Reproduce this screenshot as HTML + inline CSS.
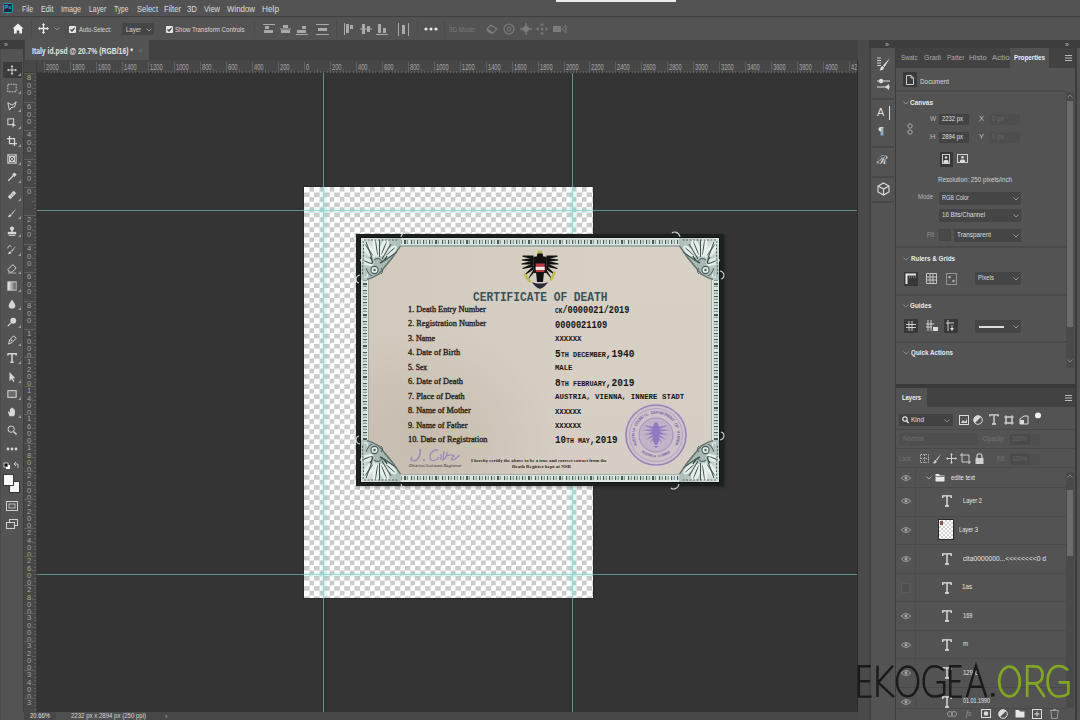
<!DOCTYPE html>
<html><head><meta charset="utf-8"><style>
*{margin:0;padding:0;box-sizing:border-box}
html,body{width:1080px;height:720px;overflow:hidden;background:#535353;font-family:"Liberation Sans",sans-serif;color:#ddd;position:relative}
.a{position:absolute}
.t{position:absolute;white-space:nowrap;line-height:1}
svg{position:absolute;overflow:visible}
.mi{font-size:9.5px;top:3px;color:#e4e4e4}
.ot{font-size:8px;color:#dedede}
.checker{background-color:#fff;background-image:linear-gradient(45deg,#cdcdcd 25%,transparent 25%,transparent 75%,#cdcdcd 75%),linear-gradient(45deg,#cdcdcd 25%,transparent 25%,transparent 75%,#cdcdcd 75%);background-size:10px 10px;background-position:0 0,5px 5px}
.rl{position:absolute;font-size:6.5px;color:#b4b4b4;line-height:1;white-space:nowrap}
.rt{position:absolute;background:#5f5f5f}
.sep{position:absolute;background:#3f3f3f;width:1px}
.ph{position:absolute;font-size:8px;font-weight:bold;color:#e8e8e8;white-space:nowrap;line-height:1}
.pt{position:absolute;font-size:7px;color:#d0d0d0;white-space:nowrap;line-height:1}
.dd{position:absolute;background:#454545;border-radius:1px}
.hl{position:absolute;background:#474747;height:1px}

</style></head><body>
<div class="a" style="left:0px;top:0px;width:1080px;height:16px;background:#535353;"></div>
<div class="a" style="left:3px;top:3px;width:10px;height:10px;background:#0d2d38;border:1px solid #2e9fc4;border-radius:1.5px;"></div>
<div class="t" style="left:4.5px;top:5.22px;font-size:5.5px;color:#3fb4e4;font-family:'Liberation Sans',sans-serif;font-weight:bold;">Ps</div>
<div class="t" style="left:22px;top:3.55px;font-size:9.6px;color:#dedede;font-family:'Liberation Sans',sans-serif;transform:scaleX(0.711);transform-origin:0 0;">File</div>
<div class="t" style="left:40.5px;top:3.55px;font-size:9.6px;color:#dedede;font-family:'Liberation Sans',sans-serif;transform:scaleX(0.756);transform-origin:0 0;">Edit</div>
<div class="t" style="left:60.6px;top:3.55px;font-size:9.6px;color:#dedede;font-family:'Liberation Sans',sans-serif;transform:scaleX(0.750);transform-origin:0 0;">Image</div>
<div class="t" style="left:88.8px;top:3.55px;font-size:9.6px;color:#dedede;font-family:'Liberation Sans',sans-serif;transform:scaleX(0.716);transform-origin:0 0;">Layer</div>
<div class="t" style="left:114.4px;top:3.55px;font-size:9.6px;color:#dedede;font-family:'Liberation Sans',sans-serif;transform:scaleX(0.692);transform-origin:0 0;">Type</div>
<div class="t" style="left:137px;top:3.55px;font-size:9.6px;color:#dedede;font-family:'Liberation Sans',sans-serif;transform:scaleX(0.787);transform-origin:0 0;">Select</div>
<div class="t" style="left:164px;top:3.55px;font-size:9.6px;color:#dedede;font-family:'Liberation Sans',sans-serif;transform:scaleX(0.797);transform-origin:0 0;">Filter</div>
<div class="t" style="left:187px;top:3.55px;font-size:9.6px;color:#dedede;font-family:'Liberation Sans',sans-serif;transform:scaleX(0.815);transform-origin:0 0;">3D</div>
<div class="t" style="left:204px;top:3.55px;font-size:9.6px;color:#dedede;font-family:'Liberation Sans',sans-serif;transform:scaleX(0.775);transform-origin:0 0;">View</div>
<div class="t" style="left:227px;top:3.55px;font-size:9.6px;color:#dedede;font-family:'Liberation Sans',sans-serif;transform:scaleX(0.820);transform-origin:0 0;">Window</div>
<div class="t" style="left:262px;top:3.55px;font-size:9.6px;color:#dedede;font-family:'Liberation Sans',sans-serif;transform:scaleX(0.861);transform-origin:0 0;">Help</div>
<div class="a" style="left:556px;top:0px;width:120px;height:2px;background:#ececec;"></div>
<div class="a" style="left:0px;top:16px;width:1080px;height:1px;background:#3f3f3f;"></div>
<svg style="left:12px;top:23px;" width="12" height="11" viewBox="0 0 12 11"><path d="M6 0.5 L11.5 5.5 L10 5.5 L10 10.5 L7.3 10.5 L7.3 7.5 L4.7 7.5 L4.7 10.5 L2 10.5 L2 5.5 L0.5 5.5 Z" fill="#efefef"/></svg>
<div class="a" style="left:31px;top:19px;width:1px;height:19px;background:#4c4c4c;"></div>
<div class="a" style="left:65px;top:19px;width:1px;height:19px;background:#4c4c4c;"></div>
<div class="a" style="left:254px;top:19px;width:1px;height:19px;background:#4c4c4c;"></div>
<div class="a" style="left:336px;top:19px;width:1px;height:19px;background:#4c4c4c;"></div>
<div class="a" style="left:417px;top:19px;width:1px;height:19px;background:#4c4c4c;"></div>
<div class="a" style="left:444px;top:19px;width:1px;height:19px;background:#4c4c4c;"></div>
<svg style="left:38px;top:23px;" width="11" height="11" viewBox="0 0 11 11"><path d="M5.5 0 L7.3 2 L6.2 2 L6.2 4.8 L9 4.8 L9 3.7 L11 5.5 L9 7.3 L9 6.2 L6.2 6.2 L6.2 9 L7.3 9 L5.5 11 L3.7 9 L4.8 9 L4.8 6.2 L2 6.2 L2 7.3 L0 5.5 L2 3.7 L2 4.8 L4.8 4.8 L4.8 2 L3.7 2 Z" fill="#e8e8e8"/></svg>
<svg style="left:54px;top:27px;" width="6" height="4" viewBox="0 0 6 4"><path d="M0.5 0.5 L3 3 L5.5 0.5" stroke="#8a8a8a" fill="none" stroke-width="1"/></svg>
<div class="a" style="left:69px;top:25.5px;width:7px;height:7px;background:#e6e6e6;border-radius:1px;"></div>
<svg style="left:69px;top:25.5px;" width="7" height="7" viewBox="0 0 7 7"><path d="M1.5 3.5 L3 5 L5.6 1.8" stroke="#3a3a3a" fill="none" stroke-width="1.2"/></svg>
<div class="a" style="left:165.5px;top:25.5px;width:7px;height:7px;background:#e6e6e6;border-radius:1px;"></div>
<svg style="left:165.5px;top:25.5px;" width="7" height="7" viewBox="0 0 7 7"><path d="M1.5 3.5 L3 5 L5.6 1.8" stroke="#3a3a3a" fill="none" stroke-width="1.2"/></svg>
<div class="t" style="left:78.5px;top:25.71px;font-size:7.3px;color:#d8d8d8;font-family:'Liberation Sans',sans-serif;transform:scaleX(0.817);transform-origin:0 0;">Auto-Select:</div>
<div class="a" style="left:121.5px;top:23px;width:32px;height:12px;background:#454545;border-radius:1px;"></div>
<div class="t" style="left:126px;top:25.71px;font-size:7.3px;color:#d8d8d8;font-family:'Liberation Sans',sans-serif;transform:scaleX(0.821);transform-origin:0 0;">Layer</div>
<svg style="left:146px;top:27.5px;" width="6" height="4" viewBox="0 0 6 4"><path d="M0.5 0.5 L3 3 L5.5 0.5" stroke="#999" fill="none" stroke-width="1"/></svg>
<div class="t" style="left:175.3px;top:25.71px;font-size:7.3px;color:#d8d8d8;font-family:'Liberation Sans',sans-serif;transform:scaleX(0.845);transform-origin:0 0;">Show Transform Controls</div>
<svg style="left:263px;top:24px;" width="12" height="11" viewBox="0 0 12 11"><rect x="0" y="0" width="12" height="1" fill="#a9a9a9"/><rect x="2" y="2" width="4" height="3" fill="#a9a9a9"/><rect x="1" y="6" width="9" height="3" fill="#a9a9a9"/></svg>
<svg style="left:280px;top:23px;" width="11" height="12" viewBox="0 0 11 12"><rect x="0" y="5.5" width="11" height="1" fill="#a9a9a9"/><rect x="3" y="2" width="5" height="3" fill="#a9a9a9"/><rect x="1" y="7" width="9" height="3" fill="#a9a9a9"/></svg>
<svg style="left:296px;top:24px;" width="12" height="11" viewBox="0 0 12 11"><rect x="0" y="10" width="12" height="1" fill="#a9a9a9"/><rect x="6" y="2" width="4" height="3" fill="#a9a9a9"/><rect x="1" y="6" width="9" height="3" fill="#a9a9a9"/></svg>
<svg style="left:316px;top:24px;" width="13" height="11" viewBox="0 0 13 11"><rect x="0" y="0" width="13" height="1" fill="#a9a9a9"/><rect x="0" y="10" width="13" height="1" fill="#a9a9a9"/><rect x="2" y="4" width="9" height="3" fill="#a9a9a9"/></svg>
<svg style="left:344px;top:23px;" width="11" height="12" viewBox="0 0 11 12"><rect x="0" y="0" width="1" height="12" fill="#a9a9a9"/><rect x="2" y="1" width="3" height="9" fill="#a9a9a9"/><rect x="6" y="2" width="3" height="4" fill="#a9a9a9"/></svg>
<svg style="left:360px;top:23px;" width="12" height="12" viewBox="0 0 12 12"><rect x="0" y="5.5" width="12" height="1" fill="#a9a9a9"/><rect x="2" y="1" width="3" height="10" fill="#a9a9a9"/><rect x="7" y="3" width="3" height="6" fill="#a9a9a9"/></svg>
<svg style="left:376px;top:23px;" width="12" height="12" viewBox="0 0 12 12"><rect x="0" y="11" width="12" height="1" fill="#a9a9a9"/><rect x="2" y="1" width="3" height="9" fill="#a9a9a9"/><rect x="7" y="5" width="3" height="5" fill="#a9a9a9"/></svg>
<svg style="left:398px;top:23px;" width="11" height="13" viewBox="0 0 11 13"><rect x="0" y="0" width="1" height="13" fill="#a9a9a9"/><rect x="10" y="0" width="1" height="13" fill="#a9a9a9"/><rect x="4" y="2" width="3" height="9" fill="#a9a9a9"/></svg>
<svg style="left:424px;top:27px;" width="14" height="4" viewBox="0 0 14 4"><circle cx="2" cy="2" r="1.6" fill="#e6e6e6"/><circle cx="7" cy="2" r="1.6" fill="#e6e6e6"/><circle cx="12" cy="2" r="1.6" fill="#e6e6e6"/></svg>
<div class="t" style="left:449px;top:25.71px;font-size:7.3px;color:#7a7a7a;font-family:'Liberation Sans',sans-serif;transform:scaleX(0.853);transform-origin:0 0;">3D Mode:</div>
<svg style="left:486px;top:23px;" width="12" height="12" viewBox="0 0 12 12"><path d="M1 6 L5 2 L11 6 L7 10 Z M1 6 C2 9 5 10 7 10" stroke="#7c7c7c" fill="none" stroke-width="1.3"/></svg>
<svg style="left:503px;top:23px;" width="12" height="12" viewBox="0 0 12 12"><circle cx="6" cy="6" r="5" stroke="#7c7c7c" fill="none" stroke-width="1.2"/><circle cx="6" cy="6" r="2" stroke="#7c7c7c" fill="none" stroke-width="1"/></svg>
<svg style="left:520px;top:23px;" width="12" height="12" viewBox="0 0 12 12"><path d="M6 0 L6 12 M0 6 L12 6" stroke="#7c7c7c" stroke-width="1.3"/><circle cx="6" cy="6" r="3" fill="#7c7c7c"/></svg>
<svg style="left:536px;top:23px;" width="12" height="12" viewBox="0 0 12 12"><path d="M6 0 L8 2.5 L4 2.5 Z M6 12 L8 9.5 L4 9.5 Z M0 6 L2.5 4 L2.5 8 Z M12 6 L9.5 4 L9.5 8 Z" fill="#7c7c7c"/><circle cx="6" cy="6" r="1.3" fill="#7c7c7c"/></svg>
<svg style="left:553px;top:24px;" width="14" height="10" viewBox="0 0 14 10"><rect x="0" y="2" width="8" height="6" fill="#7c7c7c"/><path d="M9 5 L13 1.5 L13 8.5 Z" stroke="#7c7c7c" fill="none"/></svg>
<div class="a" style="left:24px;top:40px;width:835px;height:20px;background:#424242;"></div>
<div class="a" style="left:25px;top:40px;width:124px;height:20px;background:#535353;"></div>
<div class="t" style="left:32px;top:47.41px;font-size:8.3px;color:#e4e4e4;font-family:'Liberation Sans',sans-serif;font-weight:bold;transform:scaleX(0.822);transform-origin:0 0;">Italy id.psd @ 20.7% (RGB/16) *</div>
<div class="t" style="left:138px;top:47.46px;font-size:8px;color:#7a7a7a;font-family:'Liberation Sans',sans-serif;">×</div>
<div class="a" style="left:24px;top:712px;width:835px;height:8px;background:#474747;"></div>
<div class="a" style="left:56px;top:712px;width:90px;height:8px;background:#505050;"></div>
<div class="t" style="left:30px;top:713.22px;font-size:6.5px;color:#e0e0e0;font-family:'Liberation Sans',sans-serif;transform:scaleX(0.907);transform-origin:0 0;">20.66%</div>
<div class="t" style="left:71px;top:713.22px;font-size:6.5px;color:#d0d0d0;font-family:'Liberation Sans',sans-serif;transform:scaleX(0.931);transform-origin:0 0;">2232 px x 2894 px (250 ppi)</div>
<div class="t" style="left:165px;top:712.97px;font-size:7px;color:#bbb;font-family:'Liberation Sans',sans-serif;">&#x203A;</div>
<div class="a" style="left:24px;top:60px;width:834px;height:13px;background:#474747"></div>
<div class="a" style="left:24px;top:72px;width:834px;height:1px;background:#3c3c3c"></div>
<div class="a" style="left:24px;top:73px;width:12px;height:639px;background:#474747"></div>
<div class="a" style="left:36px;top:60px;width:1px;height:652px;background:#3c3c3c"></div>
<div class="a" style="left:37px;top:73px;width:821px;height:639px;background:#343434"></div>
<div class="rt" style="left:44px;top:62px;width:1px;height:11px"></div>
<div class="rt" style="left:48px;top:71px;width:1px;height:2px"></div>
<div class="rt" style="left:51px;top:71px;width:1px;height:2px"></div>
<div class="rt" style="left:54px;top:71px;width:1px;height:2px"></div>
<div class="rt" style="left:57px;top:69px;width:1px;height:4px"></div>
<div class="rt" style="left:61px;top:71px;width:1px;height:2px"></div>
<div class="rt" style="left:64px;top:71px;width:1px;height:2px"></div>
<div class="rt" style="left:67px;top:71px;width:1px;height:2px"></div>
<div class="t" style="left:45.5px;top:63.01px;font-size:8.5px;color:#a6a6a6;font-family:'Liberation Sans',sans-serif;transform:scaleX(0.666);transform-origin:0 0;">2000</div>
<div class="rt" style="left:70px;top:62px;width:1px;height:11px"></div>
<div class="rt" style="left:74px;top:71px;width:1px;height:2px"></div>
<div class="rt" style="left:77px;top:71px;width:1px;height:2px"></div>
<div class="rt" style="left:80px;top:71px;width:1px;height:2px"></div>
<div class="rt" style="left:83px;top:69px;width:1px;height:4px"></div>
<div class="rt" style="left:87px;top:71px;width:1px;height:2px"></div>
<div class="rt" style="left:90px;top:71px;width:1px;height:2px"></div>
<div class="rt" style="left:93px;top:71px;width:1px;height:2px"></div>
<div class="t" style="left:71.5px;top:63.01px;font-size:8.5px;color:#a6a6a6;font-family:'Liberation Sans',sans-serif;transform:scaleX(0.666);transform-origin:0 0;">1800</div>
<div class="rt" style="left:96px;top:62px;width:1px;height:11px"></div>
<div class="rt" style="left:100px;top:71px;width:1px;height:2px"></div>
<div class="rt" style="left:103px;top:71px;width:1px;height:2px"></div>
<div class="rt" style="left:106px;top:71px;width:1px;height:2px"></div>
<div class="rt" style="left:109px;top:69px;width:1px;height:4px"></div>
<div class="rt" style="left:113px;top:71px;width:1px;height:2px"></div>
<div class="rt" style="left:116px;top:71px;width:1px;height:2px"></div>
<div class="rt" style="left:119px;top:71px;width:1px;height:2px"></div>
<div class="t" style="left:97.5px;top:63.01px;font-size:8.5px;color:#a6a6a6;font-family:'Liberation Sans',sans-serif;transform:scaleX(0.666);transform-origin:0 0;">1600</div>
<div class="rt" style="left:122px;top:62px;width:1px;height:11px"></div>
<div class="rt" style="left:126px;top:71px;width:1px;height:2px"></div>
<div class="rt" style="left:129px;top:71px;width:1px;height:2px"></div>
<div class="rt" style="left:132px;top:71px;width:1px;height:2px"></div>
<div class="rt" style="left:135px;top:69px;width:1px;height:4px"></div>
<div class="rt" style="left:139px;top:71px;width:1px;height:2px"></div>
<div class="rt" style="left:142px;top:71px;width:1px;height:2px"></div>
<div class="rt" style="left:145px;top:71px;width:1px;height:2px"></div>
<div class="t" style="left:123.5px;top:63.01px;font-size:8.5px;color:#a6a6a6;font-family:'Liberation Sans',sans-serif;transform:scaleX(0.666);transform-origin:0 0;">1400</div>
<div class="rt" style="left:148px;top:62px;width:1px;height:11px"></div>
<div class="rt" style="left:152px;top:71px;width:1px;height:2px"></div>
<div class="rt" style="left:155px;top:71px;width:1px;height:2px"></div>
<div class="rt" style="left:158px;top:71px;width:1px;height:2px"></div>
<div class="rt" style="left:161px;top:69px;width:1px;height:4px"></div>
<div class="rt" style="left:165px;top:71px;width:1px;height:2px"></div>
<div class="rt" style="left:168px;top:71px;width:1px;height:2px"></div>
<div class="rt" style="left:171px;top:71px;width:1px;height:2px"></div>
<div class="t" style="left:149.5px;top:63.01px;font-size:8.5px;color:#a6a6a6;font-family:'Liberation Sans',sans-serif;transform:scaleX(0.666);transform-origin:0 0;">1200</div>
<div class="rt" style="left:174px;top:62px;width:1px;height:11px"></div>
<div class="rt" style="left:177px;top:71px;width:1px;height:2px"></div>
<div class="rt" style="left:181px;top:71px;width:1px;height:2px"></div>
<div class="rt" style="left:184px;top:71px;width:1px;height:2px"></div>
<div class="rt" style="left:187px;top:69px;width:1px;height:4px"></div>
<div class="rt" style="left:190px;top:71px;width:1px;height:2px"></div>
<div class="rt" style="left:194px;top:71px;width:1px;height:2px"></div>
<div class="rt" style="left:197px;top:71px;width:1px;height:2px"></div>
<div class="t" style="left:175.5px;top:63.01px;font-size:8.5px;color:#a6a6a6;font-family:'Liberation Sans',sans-serif;transform:scaleX(0.666);transform-origin:0 0;">1000</div>
<div class="rt" style="left:200px;top:62px;width:1px;height:11px"></div>
<div class="rt" style="left:203px;top:71px;width:1px;height:2px"></div>
<div class="rt" style="left:207px;top:71px;width:1px;height:2px"></div>
<div class="rt" style="left:210px;top:71px;width:1px;height:2px"></div>
<div class="rt" style="left:213px;top:69px;width:1px;height:4px"></div>
<div class="rt" style="left:216px;top:71px;width:1px;height:2px"></div>
<div class="rt" style="left:220px;top:71px;width:1px;height:2px"></div>
<div class="rt" style="left:223px;top:71px;width:1px;height:2px"></div>
<div class="t" style="left:201.5px;top:63.01px;font-size:8.5px;color:#a6a6a6;font-family:'Liberation Sans',sans-serif;transform:scaleX(0.666);transform-origin:0 0;">800</div>
<div class="rt" style="left:226px;top:62px;width:1px;height:11px"></div>
<div class="rt" style="left:229px;top:71px;width:1px;height:2px"></div>
<div class="rt" style="left:233px;top:71px;width:1px;height:2px"></div>
<div class="rt" style="left:236px;top:71px;width:1px;height:2px"></div>
<div class="rt" style="left:239px;top:69px;width:1px;height:4px"></div>
<div class="rt" style="left:242px;top:71px;width:1px;height:2px"></div>
<div class="rt" style="left:246px;top:71px;width:1px;height:2px"></div>
<div class="rt" style="left:249px;top:71px;width:1px;height:2px"></div>
<div class="t" style="left:227.5px;top:63.01px;font-size:8.5px;color:#a6a6a6;font-family:'Liberation Sans',sans-serif;transform:scaleX(0.666);transform-origin:0 0;">600</div>
<div class="rt" style="left:252px;top:62px;width:1px;height:11px"></div>
<div class="rt" style="left:255px;top:71px;width:1px;height:2px"></div>
<div class="rt" style="left:259px;top:71px;width:1px;height:2px"></div>
<div class="rt" style="left:262px;top:71px;width:1px;height:2px"></div>
<div class="rt" style="left:265px;top:69px;width:1px;height:4px"></div>
<div class="rt" style="left:268px;top:71px;width:1px;height:2px"></div>
<div class="rt" style="left:272px;top:71px;width:1px;height:2px"></div>
<div class="rt" style="left:275px;top:71px;width:1px;height:2px"></div>
<div class="t" style="left:253.5px;top:63.01px;font-size:8.5px;color:#a6a6a6;font-family:'Liberation Sans',sans-serif;transform:scaleX(0.666);transform-origin:0 0;">400</div>
<div class="rt" style="left:278px;top:62px;width:1px;height:11px"></div>
<div class="rt" style="left:281px;top:71px;width:1px;height:2px"></div>
<div class="rt" style="left:285px;top:71px;width:1px;height:2px"></div>
<div class="rt" style="left:288px;top:71px;width:1px;height:2px"></div>
<div class="rt" style="left:291px;top:69px;width:1px;height:4px"></div>
<div class="rt" style="left:294px;top:71px;width:1px;height:2px"></div>
<div class="rt" style="left:298px;top:71px;width:1px;height:2px"></div>
<div class="rt" style="left:301px;top:71px;width:1px;height:2px"></div>
<div class="t" style="left:279.5px;top:63.01px;font-size:8.5px;color:#a6a6a6;font-family:'Liberation Sans',sans-serif;transform:scaleX(0.666);transform-origin:0 0;">200</div>
<div class="rt" style="left:304px;top:62px;width:1px;height:11px"></div>
<div class="rt" style="left:307px;top:71px;width:1px;height:2px"></div>
<div class="rt" style="left:310px;top:71px;width:1px;height:2px"></div>
<div class="rt" style="left:314px;top:71px;width:1px;height:2px"></div>
<div class="rt" style="left:317px;top:69px;width:1px;height:4px"></div>
<div class="rt" style="left:320px;top:71px;width:1px;height:2px"></div>
<div class="rt" style="left:323px;top:71px;width:1px;height:2px"></div>
<div class="rt" style="left:327px;top:71px;width:1px;height:2px"></div>
<div class="t" style="left:305.5px;top:63.01px;font-size:8.5px;color:#a6a6a6;font-family:'Liberation Sans',sans-serif;transform:scaleX(0.666);transform-origin:0 0;">0</div>
<div class="rt" style="left:330px;top:62px;width:1px;height:11px"></div>
<div class="rt" style="left:333px;top:71px;width:1px;height:2px"></div>
<div class="rt" style="left:336px;top:71px;width:1px;height:2px"></div>
<div class="rt" style="left:340px;top:71px;width:1px;height:2px"></div>
<div class="rt" style="left:343px;top:69px;width:1px;height:4px"></div>
<div class="rt" style="left:346px;top:71px;width:1px;height:2px"></div>
<div class="rt" style="left:349px;top:71px;width:1px;height:2px"></div>
<div class="rt" style="left:353px;top:71px;width:1px;height:2px"></div>
<div class="t" style="left:331.5px;top:63.01px;font-size:8.5px;color:#a6a6a6;font-family:'Liberation Sans',sans-serif;transform:scaleX(0.666);transform-origin:0 0;">200</div>
<div class="rt" style="left:356px;top:62px;width:1px;height:11px"></div>
<div class="rt" style="left:359px;top:71px;width:1px;height:2px"></div>
<div class="rt" style="left:362px;top:71px;width:1px;height:2px"></div>
<div class="rt" style="left:366px;top:71px;width:1px;height:2px"></div>
<div class="rt" style="left:369px;top:69px;width:1px;height:4px"></div>
<div class="rt" style="left:372px;top:71px;width:1px;height:2px"></div>
<div class="rt" style="left:375px;top:71px;width:1px;height:2px"></div>
<div class="rt" style="left:379px;top:71px;width:1px;height:2px"></div>
<div class="t" style="left:357.5px;top:63.01px;font-size:8.5px;color:#a6a6a6;font-family:'Liberation Sans',sans-serif;transform:scaleX(0.666);transform-origin:0 0;">400</div>
<div class="rt" style="left:382px;top:62px;width:1px;height:11px"></div>
<div class="rt" style="left:385px;top:71px;width:1px;height:2px"></div>
<div class="rt" style="left:388px;top:71px;width:1px;height:2px"></div>
<div class="rt" style="left:392px;top:71px;width:1px;height:2px"></div>
<div class="rt" style="left:395px;top:69px;width:1px;height:4px"></div>
<div class="rt" style="left:398px;top:71px;width:1px;height:2px"></div>
<div class="rt" style="left:401px;top:71px;width:1px;height:2px"></div>
<div class="rt" style="left:405px;top:71px;width:1px;height:2px"></div>
<div class="t" style="left:383.5px;top:63.01px;font-size:8.5px;color:#a6a6a6;font-family:'Liberation Sans',sans-serif;transform:scaleX(0.666);transform-origin:0 0;">600</div>
<div class="rt" style="left:408px;top:62px;width:1px;height:11px"></div>
<div class="rt" style="left:411px;top:71px;width:1px;height:2px"></div>
<div class="rt" style="left:414px;top:71px;width:1px;height:2px"></div>
<div class="rt" style="left:418px;top:71px;width:1px;height:2px"></div>
<div class="rt" style="left:421px;top:69px;width:1px;height:4px"></div>
<div class="rt" style="left:424px;top:71px;width:1px;height:2px"></div>
<div class="rt" style="left:427px;top:71px;width:1px;height:2px"></div>
<div class="rt" style="left:431px;top:71px;width:1px;height:2px"></div>
<div class="t" style="left:409.5px;top:63.01px;font-size:8.5px;color:#a6a6a6;font-family:'Liberation Sans',sans-serif;transform:scaleX(0.666);transform-origin:0 0;">800</div>
<div class="rt" style="left:434px;top:62px;width:1px;height:11px"></div>
<div class="rt" style="left:437px;top:71px;width:1px;height:2px"></div>
<div class="rt" style="left:440px;top:71px;width:1px;height:2px"></div>
<div class="rt" style="left:443px;top:71px;width:1px;height:2px"></div>
<div class="rt" style="left:447px;top:69px;width:1px;height:4px"></div>
<div class="rt" style="left:450px;top:71px;width:1px;height:2px"></div>
<div class="rt" style="left:453px;top:71px;width:1px;height:2px"></div>
<div class="rt" style="left:456px;top:71px;width:1px;height:2px"></div>
<div class="t" style="left:435.5px;top:63.01px;font-size:8.5px;color:#a6a6a6;font-family:'Liberation Sans',sans-serif;transform:scaleX(0.666);transform-origin:0 0;">1000</div>
<div class="rt" style="left:460px;top:62px;width:1px;height:11px"></div>
<div class="rt" style="left:463px;top:71px;width:1px;height:2px"></div>
<div class="rt" style="left:466px;top:71px;width:1px;height:2px"></div>
<div class="rt" style="left:469px;top:71px;width:1px;height:2px"></div>
<div class="rt" style="left:473px;top:69px;width:1px;height:4px"></div>
<div class="rt" style="left:476px;top:71px;width:1px;height:2px"></div>
<div class="rt" style="left:479px;top:71px;width:1px;height:2px"></div>
<div class="rt" style="left:482px;top:71px;width:1px;height:2px"></div>
<div class="t" style="left:461.5px;top:63.01px;font-size:8.5px;color:#a6a6a6;font-family:'Liberation Sans',sans-serif;transform:scaleX(0.666);transform-origin:0 0;">1200</div>
<div class="rt" style="left:486px;top:62px;width:1px;height:11px"></div>
<div class="rt" style="left:489px;top:71px;width:1px;height:2px"></div>
<div class="rt" style="left:492px;top:71px;width:1px;height:2px"></div>
<div class="rt" style="left:495px;top:71px;width:1px;height:2px"></div>
<div class="rt" style="left:499px;top:69px;width:1px;height:4px"></div>
<div class="rt" style="left:502px;top:71px;width:1px;height:2px"></div>
<div class="rt" style="left:505px;top:71px;width:1px;height:2px"></div>
<div class="rt" style="left:508px;top:71px;width:1px;height:2px"></div>
<div class="t" style="left:487.5px;top:63.01px;font-size:8.5px;color:#a6a6a6;font-family:'Liberation Sans',sans-serif;transform:scaleX(0.666);transform-origin:0 0;">1400</div>
<div class="rt" style="left:512px;top:62px;width:1px;height:11px"></div>
<div class="rt" style="left:515px;top:71px;width:1px;height:2px"></div>
<div class="rt" style="left:518px;top:71px;width:1px;height:2px"></div>
<div class="rt" style="left:521px;top:71px;width:1px;height:2px"></div>
<div class="rt" style="left:525px;top:69px;width:1px;height:4px"></div>
<div class="rt" style="left:528px;top:71px;width:1px;height:2px"></div>
<div class="rt" style="left:531px;top:71px;width:1px;height:2px"></div>
<div class="rt" style="left:534px;top:71px;width:1px;height:2px"></div>
<div class="t" style="left:513.5px;top:63.01px;font-size:8.5px;color:#a6a6a6;font-family:'Liberation Sans',sans-serif;transform:scaleX(0.666);transform-origin:0 0;">1600</div>
<div class="rt" style="left:538px;top:62px;width:1px;height:11px"></div>
<div class="rt" style="left:541px;top:71px;width:1px;height:2px"></div>
<div class="rt" style="left:544px;top:71px;width:1px;height:2px"></div>
<div class="rt" style="left:547px;top:71px;width:1px;height:2px"></div>
<div class="rt" style="left:551px;top:69px;width:1px;height:4px"></div>
<div class="rt" style="left:554px;top:71px;width:1px;height:2px"></div>
<div class="rt" style="left:557px;top:71px;width:1px;height:2px"></div>
<div class="rt" style="left:560px;top:71px;width:1px;height:2px"></div>
<div class="t" style="left:539.5px;top:63.01px;font-size:8.5px;color:#a6a6a6;font-family:'Liberation Sans',sans-serif;transform:scaleX(0.666);transform-origin:0 0;">1800</div>
<div class="rt" style="left:564px;top:62px;width:1px;height:11px"></div>
<div class="rt" style="left:567px;top:71px;width:1px;height:2px"></div>
<div class="rt" style="left:570px;top:71px;width:1px;height:2px"></div>
<div class="rt" style="left:573px;top:71px;width:1px;height:2px"></div>
<div class="rt" style="left:576px;top:69px;width:1px;height:4px"></div>
<div class="rt" style="left:580px;top:71px;width:1px;height:2px"></div>
<div class="rt" style="left:583px;top:71px;width:1px;height:2px"></div>
<div class="rt" style="left:586px;top:71px;width:1px;height:2px"></div>
<div class="t" style="left:565.5px;top:63.01px;font-size:8.5px;color:#a6a6a6;font-family:'Liberation Sans',sans-serif;transform:scaleX(0.666);transform-origin:0 0;">2000</div>
<div class="rt" style="left:589px;top:62px;width:1px;height:11px"></div>
<div class="rt" style="left:593px;top:71px;width:1px;height:2px"></div>
<div class="rt" style="left:596px;top:71px;width:1px;height:2px"></div>
<div class="rt" style="left:599px;top:71px;width:1px;height:2px"></div>
<div class="rt" style="left:602px;top:69px;width:1px;height:4px"></div>
<div class="rt" style="left:606px;top:71px;width:1px;height:2px"></div>
<div class="rt" style="left:609px;top:71px;width:1px;height:2px"></div>
<div class="rt" style="left:612px;top:71px;width:1px;height:2px"></div>
<div class="t" style="left:590.5px;top:63.01px;font-size:8.5px;color:#a6a6a6;font-family:'Liberation Sans',sans-serif;transform:scaleX(0.666);transform-origin:0 0;">2200</div>
<div class="rt" style="left:615px;top:62px;width:1px;height:11px"></div>
<div class="rt" style="left:619px;top:71px;width:1px;height:2px"></div>
<div class="rt" style="left:622px;top:71px;width:1px;height:2px"></div>
<div class="rt" style="left:625px;top:71px;width:1px;height:2px"></div>
<div class="rt" style="left:628px;top:69px;width:1px;height:4px"></div>
<div class="rt" style="left:632px;top:71px;width:1px;height:2px"></div>
<div class="rt" style="left:635px;top:71px;width:1px;height:2px"></div>
<div class="rt" style="left:638px;top:71px;width:1px;height:2px"></div>
<div class="t" style="left:616.5px;top:63.01px;font-size:8.5px;color:#a6a6a6;font-family:'Liberation Sans',sans-serif;transform:scaleX(0.666);transform-origin:0 0;">2400</div>
<div class="rt" style="left:641px;top:62px;width:1px;height:11px"></div>
<div class="rt" style="left:645px;top:71px;width:1px;height:2px"></div>
<div class="rt" style="left:648px;top:71px;width:1px;height:2px"></div>
<div class="rt" style="left:651px;top:71px;width:1px;height:2px"></div>
<div class="rt" style="left:654px;top:69px;width:1px;height:4px"></div>
<div class="rt" style="left:658px;top:71px;width:1px;height:2px"></div>
<div class="rt" style="left:661px;top:71px;width:1px;height:2px"></div>
<div class="rt" style="left:664px;top:71px;width:1px;height:2px"></div>
<div class="t" style="left:642.5px;top:63.01px;font-size:8.5px;color:#a6a6a6;font-family:'Liberation Sans',sans-serif;transform:scaleX(0.666);transform-origin:0 0;">2600</div>
<div class="rt" style="left:667px;top:62px;width:1px;height:11px"></div>
<div class="rt" style="left:671px;top:71px;width:1px;height:2px"></div>
<div class="rt" style="left:674px;top:71px;width:1px;height:2px"></div>
<div class="rt" style="left:677px;top:71px;width:1px;height:2px"></div>
<div class="rt" style="left:680px;top:69px;width:1px;height:4px"></div>
<div class="rt" style="left:684px;top:71px;width:1px;height:2px"></div>
<div class="rt" style="left:687px;top:71px;width:1px;height:2px"></div>
<div class="rt" style="left:690px;top:71px;width:1px;height:2px"></div>
<div class="t" style="left:668.5px;top:63.01px;font-size:8.5px;color:#a6a6a6;font-family:'Liberation Sans',sans-serif;transform:scaleX(0.666);transform-origin:0 0;">2800</div>
<div class="rt" style="left:693px;top:62px;width:1px;height:11px"></div>
<div class="rt" style="left:696px;top:71px;width:1px;height:2px"></div>
<div class="rt" style="left:700px;top:71px;width:1px;height:2px"></div>
<div class="rt" style="left:703px;top:71px;width:1px;height:2px"></div>
<div class="rt" style="left:706px;top:69px;width:1px;height:4px"></div>
<div class="rt" style="left:709px;top:71px;width:1px;height:2px"></div>
<div class="rt" style="left:713px;top:71px;width:1px;height:2px"></div>
<div class="rt" style="left:716px;top:71px;width:1px;height:2px"></div>
<div class="t" style="left:694.5px;top:63.01px;font-size:8.5px;color:#a6a6a6;font-family:'Liberation Sans',sans-serif;transform:scaleX(0.666);transform-origin:0 0;">3000</div>
<div class="rt" style="left:719px;top:62px;width:1px;height:11px"></div>
<div class="rt" style="left:722px;top:71px;width:1px;height:2px"></div>
<div class="rt" style="left:726px;top:71px;width:1px;height:2px"></div>
<div class="rt" style="left:729px;top:71px;width:1px;height:2px"></div>
<div class="rt" style="left:732px;top:69px;width:1px;height:4px"></div>
<div class="rt" style="left:735px;top:71px;width:1px;height:2px"></div>
<div class="rt" style="left:739px;top:71px;width:1px;height:2px"></div>
<div class="rt" style="left:742px;top:71px;width:1px;height:2px"></div>
<div class="t" style="left:720.5px;top:63.01px;font-size:8.5px;color:#a6a6a6;font-family:'Liberation Sans',sans-serif;transform:scaleX(0.666);transform-origin:0 0;">3200</div>
<div class="rt" style="left:745px;top:62px;width:1px;height:11px"></div>
<div class="rt" style="left:748px;top:71px;width:1px;height:2px"></div>
<div class="rt" style="left:752px;top:71px;width:1px;height:2px"></div>
<div class="rt" style="left:755px;top:71px;width:1px;height:2px"></div>
<div class="rt" style="left:758px;top:69px;width:1px;height:4px"></div>
<div class="rt" style="left:761px;top:71px;width:1px;height:2px"></div>
<div class="rt" style="left:765px;top:71px;width:1px;height:2px"></div>
<div class="rt" style="left:768px;top:71px;width:1px;height:2px"></div>
<div class="t" style="left:746.5px;top:63.01px;font-size:8.5px;color:#a6a6a6;font-family:'Liberation Sans',sans-serif;transform:scaleX(0.666);transform-origin:0 0;">3400</div>
<div class="rt" style="left:771px;top:62px;width:1px;height:11px"></div>
<div class="rt" style="left:774px;top:71px;width:1px;height:2px"></div>
<div class="rt" style="left:778px;top:71px;width:1px;height:2px"></div>
<div class="rt" style="left:781px;top:71px;width:1px;height:2px"></div>
<div class="rt" style="left:784px;top:69px;width:1px;height:4px"></div>
<div class="rt" style="left:787px;top:71px;width:1px;height:2px"></div>
<div class="rt" style="left:791px;top:71px;width:1px;height:2px"></div>
<div class="rt" style="left:794px;top:71px;width:1px;height:2px"></div>
<div class="t" style="left:772.5px;top:63.01px;font-size:8.5px;color:#a6a6a6;font-family:'Liberation Sans',sans-serif;transform:scaleX(0.666);transform-origin:0 0;">3600</div>
<div class="rt" style="left:797px;top:62px;width:1px;height:11px"></div>
<div class="rt" style="left:800px;top:71px;width:1px;height:2px"></div>
<div class="rt" style="left:804px;top:71px;width:1px;height:2px"></div>
<div class="rt" style="left:807px;top:71px;width:1px;height:2px"></div>
<div class="rt" style="left:810px;top:69px;width:1px;height:4px"></div>
<div class="rt" style="left:813px;top:71px;width:1px;height:2px"></div>
<div class="rt" style="left:817px;top:71px;width:1px;height:2px"></div>
<div class="rt" style="left:820px;top:71px;width:1px;height:2px"></div>
<div class="t" style="left:798.5px;top:63.01px;font-size:8.5px;color:#a6a6a6;font-family:'Liberation Sans',sans-serif;transform:scaleX(0.666);transform-origin:0 0;">3800</div>
<div class="rt" style="left:823px;top:62px;width:1px;height:11px"></div>
<div class="rt" style="left:826px;top:71px;width:1px;height:2px"></div>
<div class="rt" style="left:829px;top:71px;width:1px;height:2px"></div>
<div class="rt" style="left:833px;top:71px;width:1px;height:2px"></div>
<div class="rt" style="left:836px;top:69px;width:1px;height:4px"></div>
<div class="rt" style="left:839px;top:71px;width:1px;height:2px"></div>
<div class="rt" style="left:842px;top:71px;width:1px;height:2px"></div>
<div class="rt" style="left:846px;top:71px;width:1px;height:2px"></div>
<div class="t" style="left:824.5px;top:63.01px;font-size:8.5px;color:#a6a6a6;font-family:'Liberation Sans',sans-serif;transform:scaleX(0.666);transform-origin:0 0;">4000</div>
<div class="rt" style="left:849px;top:62px;width:1px;height:11px"></div>
<div class="rt" style="left:852px;top:71px;width:1px;height:2px"></div>
<div class="rt" style="left:855px;top:71px;width:1px;height:2px"></div>
<div class="t" style="left:850.5px;top:63.01px;font-size:8.5px;color:#a6a6a6;font-family:'Liberation Sans',sans-serif;transform:scaleX(0.666);transform-origin:0 0;">4200</div>
<div class="rt" style="left:24px;top:73px;width:12px;height:1px"></div>
<div class="rt" style="left:34px;top:77px;width:2px;height:1px"></div>
<div class="rt" style="left:34px;top:80px;width:2px;height:1px"></div>
<div class="rt" style="left:34px;top:84px;width:2px;height:1px"></div>
<div class="rt" style="left:32px;top:88px;width:4px;height:1px"></div>
<div class="rt" style="left:34px;top:91px;width:2px;height:1px"></div>
<div class="rt" style="left:34px;top:95px;width:2px;height:1px"></div>
<div class="rt" style="left:34px;top:98px;width:2px;height:1px"></div>
<div class="t" style="left:26.5px;top:74.46px;font-size:8px;color:#a6a6a6;font-family:'Liberation Sans',sans-serif;transform:scaleX(0.944);transform-origin:0 0;">8</div>
<div class="t" style="left:26.5px;top:81.76px;font-size:8px;color:#a6a6a6;font-family:'Liberation Sans',sans-serif;transform:scaleX(0.944);transform-origin:0 0;">0</div>
<div class="t" style="left:26.5px;top:89.06px;font-size:8px;color:#a6a6a6;font-family:'Liberation Sans',sans-serif;transform:scaleX(0.944);transform-origin:0 0;">0</div>
<div class="rt" style="left:24px;top:102px;width:12px;height:1px"></div>
<div class="rt" style="left:34px;top:105px;width:2px;height:1px"></div>
<div class="rt" style="left:34px;top:109px;width:2px;height:1px"></div>
<div class="rt" style="left:34px;top:112px;width:2px;height:1px"></div>
<div class="rt" style="left:32px;top:116px;width:4px;height:1px"></div>
<div class="rt" style="left:34px;top:120px;width:2px;height:1px"></div>
<div class="rt" style="left:34px;top:123px;width:2px;height:1px"></div>
<div class="rt" style="left:34px;top:127px;width:2px;height:1px"></div>
<div class="t" style="left:26.5px;top:103.46px;font-size:8px;color:#a6a6a6;font-family:'Liberation Sans',sans-serif;transform:scaleX(0.944);transform-origin:0 0;">6</div>
<div class="t" style="left:26.5px;top:110.76px;font-size:8px;color:#a6a6a6;font-family:'Liberation Sans',sans-serif;transform:scaleX(0.944);transform-origin:0 0;">0</div>
<div class="t" style="left:26.5px;top:118.06px;font-size:8px;color:#a6a6a6;font-family:'Liberation Sans',sans-serif;transform:scaleX(0.944);transform-origin:0 0;">0</div>
<div class="rt" style="left:24px;top:130px;width:12px;height:1px"></div>
<div class="rt" style="left:34px;top:134px;width:2px;height:1px"></div>
<div class="rt" style="left:34px;top:137px;width:2px;height:1px"></div>
<div class="rt" style="left:34px;top:141px;width:2px;height:1px"></div>
<div class="rt" style="left:32px;top:144px;width:4px;height:1px"></div>
<div class="rt" style="left:34px;top:148px;width:2px;height:1px"></div>
<div class="rt" style="left:34px;top:152px;width:2px;height:1px"></div>
<div class="rt" style="left:34px;top:155px;width:2px;height:1px"></div>
<div class="t" style="left:26.5px;top:131.46px;font-size:8px;color:#a6a6a6;font-family:'Liberation Sans',sans-serif;transform:scaleX(0.944);transform-origin:0 0;">4</div>
<div class="t" style="left:26.5px;top:138.76px;font-size:8px;color:#a6a6a6;font-family:'Liberation Sans',sans-serif;transform:scaleX(0.944);transform-origin:0 0;">0</div>
<div class="t" style="left:26.5px;top:146.06px;font-size:8px;color:#a6a6a6;font-family:'Liberation Sans',sans-serif;transform:scaleX(0.944);transform-origin:0 0;">0</div>
<div class="rt" style="left:24px;top:159px;width:12px;height:1px"></div>
<div class="rt" style="left:34px;top:162px;width:2px;height:1px"></div>
<div class="rt" style="left:34px;top:166px;width:2px;height:1px"></div>
<div class="rt" style="left:34px;top:169px;width:2px;height:1px"></div>
<div class="rt" style="left:32px;top:173px;width:4px;height:1px"></div>
<div class="rt" style="left:34px;top:176px;width:2px;height:1px"></div>
<div class="rt" style="left:34px;top:180px;width:2px;height:1px"></div>
<div class="rt" style="left:34px;top:183px;width:2px;height:1px"></div>
<div class="t" style="left:26.5px;top:160.46px;font-size:8px;color:#a6a6a6;font-family:'Liberation Sans',sans-serif;transform:scaleX(0.944);transform-origin:0 0;">2</div>
<div class="t" style="left:26.5px;top:167.76px;font-size:8px;color:#a6a6a6;font-family:'Liberation Sans',sans-serif;transform:scaleX(0.944);transform-origin:0 0;">0</div>
<div class="t" style="left:26.5px;top:175.06px;font-size:8px;color:#a6a6a6;font-family:'Liberation Sans',sans-serif;transform:scaleX(0.944);transform-origin:0 0;">0</div>
<div class="rt" style="left:24px;top:187px;width:12px;height:1px"></div>
<div class="rt" style="left:34px;top:191px;width:2px;height:1px"></div>
<div class="rt" style="left:34px;top:194px;width:2px;height:1px"></div>
<div class="rt" style="left:34px;top:198px;width:2px;height:1px"></div>
<div class="rt" style="left:32px;top:201px;width:4px;height:1px"></div>
<div class="rt" style="left:34px;top:205px;width:2px;height:1px"></div>
<div class="rt" style="left:34px;top:208px;width:2px;height:1px"></div>
<div class="rt" style="left:34px;top:212px;width:2px;height:1px"></div>
<div class="t" style="left:26.5px;top:188.46px;font-size:8px;color:#a6a6a6;font-family:'Liberation Sans',sans-serif;transform:scaleX(0.944);transform-origin:0 0;">0</div>
<div class="rt" style="left:24px;top:215px;width:12px;height:1px"></div>
<div class="rt" style="left:34px;top:219px;width:2px;height:1px"></div>
<div class="rt" style="left:34px;top:222px;width:2px;height:1px"></div>
<div class="rt" style="left:34px;top:226px;width:2px;height:1px"></div>
<div class="rt" style="left:32px;top:230px;width:4px;height:1px"></div>
<div class="rt" style="left:34px;top:233px;width:2px;height:1px"></div>
<div class="rt" style="left:34px;top:237px;width:2px;height:1px"></div>
<div class="rt" style="left:34px;top:240px;width:2px;height:1px"></div>
<div class="t" style="left:26.5px;top:216.46px;font-size:8px;color:#a6a6a6;font-family:'Liberation Sans',sans-serif;transform:scaleX(0.944);transform-origin:0 0;">2</div>
<div class="t" style="left:26.5px;top:223.76px;font-size:8px;color:#a6a6a6;font-family:'Liberation Sans',sans-serif;transform:scaleX(0.944);transform-origin:0 0;">0</div>
<div class="t" style="left:26.5px;top:231.06px;font-size:8px;color:#a6a6a6;font-family:'Liberation Sans',sans-serif;transform:scaleX(0.944);transform-origin:0 0;">0</div>
<div class="rt" style="left:24px;top:244px;width:12px;height:1px"></div>
<div class="rt" style="left:34px;top:247px;width:2px;height:1px"></div>
<div class="rt" style="left:34px;top:251px;width:2px;height:1px"></div>
<div class="rt" style="left:34px;top:254px;width:2px;height:1px"></div>
<div class="rt" style="left:32px;top:258px;width:4px;height:1px"></div>
<div class="rt" style="left:34px;top:262px;width:2px;height:1px"></div>
<div class="rt" style="left:34px;top:265px;width:2px;height:1px"></div>
<div class="rt" style="left:34px;top:269px;width:2px;height:1px"></div>
<div class="t" style="left:26.5px;top:245.46px;font-size:8px;color:#a6a6a6;font-family:'Liberation Sans',sans-serif;transform:scaleX(0.944);transform-origin:0 0;">4</div>
<div class="t" style="left:26.5px;top:252.76px;font-size:8px;color:#a6a6a6;font-family:'Liberation Sans',sans-serif;transform:scaleX(0.944);transform-origin:0 0;">0</div>
<div class="t" style="left:26.5px;top:260.06px;font-size:8px;color:#a6a6a6;font-family:'Liberation Sans',sans-serif;transform:scaleX(0.944);transform-origin:0 0;">0</div>
<div class="rt" style="left:24px;top:272px;width:12px;height:1px"></div>
<div class="rt" style="left:34px;top:276px;width:2px;height:1px"></div>
<div class="rt" style="left:34px;top:279px;width:2px;height:1px"></div>
<div class="rt" style="left:34px;top:283px;width:2px;height:1px"></div>
<div class="rt" style="left:32px;top:286px;width:4px;height:1px"></div>
<div class="rt" style="left:34px;top:290px;width:2px;height:1px"></div>
<div class="rt" style="left:34px;top:294px;width:2px;height:1px"></div>
<div class="rt" style="left:34px;top:297px;width:2px;height:1px"></div>
<div class="t" style="left:26.5px;top:273.46px;font-size:8px;color:#a6a6a6;font-family:'Liberation Sans',sans-serif;transform:scaleX(0.944);transform-origin:0 0;">6</div>
<div class="t" style="left:26.5px;top:280.76px;font-size:8px;color:#a6a6a6;font-family:'Liberation Sans',sans-serif;transform:scaleX(0.944);transform-origin:0 0;">0</div>
<div class="t" style="left:26.5px;top:288.06px;font-size:8px;color:#a6a6a6;font-family:'Liberation Sans',sans-serif;transform:scaleX(0.944);transform-origin:0 0;">0</div>
<div class="rt" style="left:24px;top:301px;width:12px;height:1px"></div>
<div class="rt" style="left:34px;top:304px;width:2px;height:1px"></div>
<div class="rt" style="left:34px;top:308px;width:2px;height:1px"></div>
<div class="rt" style="left:34px;top:311px;width:2px;height:1px"></div>
<div class="rt" style="left:32px;top:315px;width:4px;height:1px"></div>
<div class="rt" style="left:34px;top:318px;width:2px;height:1px"></div>
<div class="rt" style="left:34px;top:322px;width:2px;height:1px"></div>
<div class="rt" style="left:34px;top:325px;width:2px;height:1px"></div>
<div class="t" style="left:26.5px;top:302.46px;font-size:8px;color:#a6a6a6;font-family:'Liberation Sans',sans-serif;transform:scaleX(0.944);transform-origin:0 0;">8</div>
<div class="t" style="left:26.5px;top:309.76px;font-size:8px;color:#a6a6a6;font-family:'Liberation Sans',sans-serif;transform:scaleX(0.944);transform-origin:0 0;">0</div>
<div class="t" style="left:26.5px;top:317.06px;font-size:8px;color:#a6a6a6;font-family:'Liberation Sans',sans-serif;transform:scaleX(0.944);transform-origin:0 0;">0</div>
<div class="rt" style="left:24px;top:329px;width:12px;height:1px"></div>
<div class="rt" style="left:34px;top:333px;width:2px;height:1px"></div>
<div class="rt" style="left:34px;top:336px;width:2px;height:1px"></div>
<div class="rt" style="left:34px;top:340px;width:2px;height:1px"></div>
<div class="rt" style="left:32px;top:343px;width:4px;height:1px"></div>
<div class="rt" style="left:34px;top:347px;width:2px;height:1px"></div>
<div class="rt" style="left:34px;top:350px;width:2px;height:1px"></div>
<div class="rt" style="left:34px;top:354px;width:2px;height:1px"></div>
<div class="t" style="left:26.5px;top:330.46px;font-size:8px;color:#a6a6a6;font-family:'Liberation Sans',sans-serif;transform:scaleX(0.944);transform-origin:0 0;">1</div>
<div class="t" style="left:26.5px;top:337.76px;font-size:8px;color:#a6a6a6;font-family:'Liberation Sans',sans-serif;transform:scaleX(0.944);transform-origin:0 0;">0</div>
<div class="t" style="left:26.5px;top:345.06px;font-size:8px;color:#a6a6a6;font-family:'Liberation Sans',sans-serif;transform:scaleX(0.944);transform-origin:0 0;">0</div>
<div class="t" style="left:26.5px;top:352.36px;font-size:8px;color:#a6a6a6;font-family:'Liberation Sans',sans-serif;transform:scaleX(0.944);transform-origin:0 0;">0</div>
<div class="rt" style="left:24px;top:357px;width:12px;height:1px"></div>
<div class="rt" style="left:34px;top:361px;width:2px;height:1px"></div>
<div class="rt" style="left:34px;top:364px;width:2px;height:1px"></div>
<div class="rt" style="left:34px;top:368px;width:2px;height:1px"></div>
<div class="rt" style="left:32px;top:372px;width:4px;height:1px"></div>
<div class="rt" style="left:34px;top:375px;width:2px;height:1px"></div>
<div class="rt" style="left:34px;top:379px;width:2px;height:1px"></div>
<div class="rt" style="left:34px;top:382px;width:2px;height:1px"></div>
<div class="t" style="left:26.5px;top:358.46px;font-size:8px;color:#a6a6a6;font-family:'Liberation Sans',sans-serif;transform:scaleX(0.944);transform-origin:0 0;">1</div>
<div class="t" style="left:26.5px;top:365.76px;font-size:8px;color:#a6a6a6;font-family:'Liberation Sans',sans-serif;transform:scaleX(0.944);transform-origin:0 0;">2</div>
<div class="t" style="left:26.5px;top:373.06px;font-size:8px;color:#a6a6a6;font-family:'Liberation Sans',sans-serif;transform:scaleX(0.944);transform-origin:0 0;">0</div>
<div class="t" style="left:26.5px;top:380.36px;font-size:8px;color:#a6a6a6;font-family:'Liberation Sans',sans-serif;transform:scaleX(0.944);transform-origin:0 0;">0</div>
<div class="rt" style="left:24px;top:386px;width:12px;height:1px"></div>
<div class="rt" style="left:34px;top:389px;width:2px;height:1px"></div>
<div class="rt" style="left:34px;top:393px;width:2px;height:1px"></div>
<div class="rt" style="left:34px;top:396px;width:2px;height:1px"></div>
<div class="rt" style="left:32px;top:400px;width:4px;height:1px"></div>
<div class="rt" style="left:34px;top:404px;width:2px;height:1px"></div>
<div class="rt" style="left:34px;top:407px;width:2px;height:1px"></div>
<div class="rt" style="left:34px;top:411px;width:2px;height:1px"></div>
<div class="t" style="left:26.5px;top:387.46px;font-size:8px;color:#a6a6a6;font-family:'Liberation Sans',sans-serif;transform:scaleX(0.944);transform-origin:0 0;">1</div>
<div class="t" style="left:26.5px;top:394.76px;font-size:8px;color:#a6a6a6;font-family:'Liberation Sans',sans-serif;transform:scaleX(0.944);transform-origin:0 0;">4</div>
<div class="t" style="left:26.5px;top:402.06px;font-size:8px;color:#a6a6a6;font-family:'Liberation Sans',sans-serif;transform:scaleX(0.944);transform-origin:0 0;">0</div>
<div class="t" style="left:26.5px;top:409.36px;font-size:8px;color:#a6a6a6;font-family:'Liberation Sans',sans-serif;transform:scaleX(0.944);transform-origin:0 0;">0</div>
<div class="rt" style="left:24px;top:414px;width:12px;height:1px"></div>
<div class="rt" style="left:34px;top:418px;width:2px;height:1px"></div>
<div class="rt" style="left:34px;top:421px;width:2px;height:1px"></div>
<div class="rt" style="left:34px;top:425px;width:2px;height:1px"></div>
<div class="rt" style="left:32px;top:428px;width:4px;height:1px"></div>
<div class="rt" style="left:34px;top:432px;width:2px;height:1px"></div>
<div class="rt" style="left:34px;top:436px;width:2px;height:1px"></div>
<div class="rt" style="left:34px;top:439px;width:2px;height:1px"></div>
<div class="t" style="left:26.5px;top:415.46px;font-size:8px;color:#a6a6a6;font-family:'Liberation Sans',sans-serif;transform:scaleX(0.944);transform-origin:0 0;">1</div>
<div class="t" style="left:26.5px;top:422.76px;font-size:8px;color:#a6a6a6;font-family:'Liberation Sans',sans-serif;transform:scaleX(0.944);transform-origin:0 0;">6</div>
<div class="t" style="left:26.5px;top:430.06px;font-size:8px;color:#a6a6a6;font-family:'Liberation Sans',sans-serif;transform:scaleX(0.944);transform-origin:0 0;">0</div>
<div class="t" style="left:26.5px;top:437.36px;font-size:8px;color:#a6a6a6;font-family:'Liberation Sans',sans-serif;transform:scaleX(0.944);transform-origin:0 0;">0</div>
<div class="rt" style="left:24px;top:443px;width:12px;height:1px"></div>
<div class="rt" style="left:34px;top:446px;width:2px;height:1px"></div>
<div class="rt" style="left:34px;top:450px;width:2px;height:1px"></div>
<div class="rt" style="left:34px;top:453px;width:2px;height:1px"></div>
<div class="rt" style="left:32px;top:457px;width:4px;height:1px"></div>
<div class="rt" style="left:34px;top:460px;width:2px;height:1px"></div>
<div class="rt" style="left:34px;top:464px;width:2px;height:1px"></div>
<div class="rt" style="left:34px;top:467px;width:2px;height:1px"></div>
<div class="t" style="left:26.5px;top:444.46px;font-size:8px;color:#a6a6a6;font-family:'Liberation Sans',sans-serif;transform:scaleX(0.944);transform-origin:0 0;">1</div>
<div class="t" style="left:26.5px;top:451.76px;font-size:8px;color:#a6a6a6;font-family:'Liberation Sans',sans-serif;transform:scaleX(0.944);transform-origin:0 0;">8</div>
<div class="t" style="left:26.5px;top:459.06px;font-size:8px;color:#a6a6a6;font-family:'Liberation Sans',sans-serif;transform:scaleX(0.944);transform-origin:0 0;">0</div>
<div class="t" style="left:26.5px;top:466.36px;font-size:8px;color:#a6a6a6;font-family:'Liberation Sans',sans-serif;transform:scaleX(0.944);transform-origin:0 0;">0</div>
<div class="rt" style="left:24px;top:471px;width:12px;height:1px"></div>
<div class="rt" style="left:34px;top:475px;width:2px;height:1px"></div>
<div class="rt" style="left:34px;top:478px;width:2px;height:1px"></div>
<div class="rt" style="left:34px;top:482px;width:2px;height:1px"></div>
<div class="rt" style="left:32px;top:485px;width:4px;height:1px"></div>
<div class="rt" style="left:34px;top:489px;width:2px;height:1px"></div>
<div class="rt" style="left:34px;top:492px;width:2px;height:1px"></div>
<div class="rt" style="left:34px;top:496px;width:2px;height:1px"></div>
<div class="t" style="left:26.5px;top:472.46px;font-size:8px;color:#a6a6a6;font-family:'Liberation Sans',sans-serif;transform:scaleX(0.944);transform-origin:0 0;">2</div>
<div class="t" style="left:26.5px;top:479.76px;font-size:8px;color:#a6a6a6;font-family:'Liberation Sans',sans-serif;transform:scaleX(0.944);transform-origin:0 0;">0</div>
<div class="t" style="left:26.5px;top:487.06px;font-size:8px;color:#a6a6a6;font-family:'Liberation Sans',sans-serif;transform:scaleX(0.944);transform-origin:0 0;">0</div>
<div class="t" style="left:26.5px;top:494.36px;font-size:8px;color:#a6a6a6;font-family:'Liberation Sans',sans-serif;transform:scaleX(0.944);transform-origin:0 0;">0</div>
<div class="rt" style="left:24px;top:499px;width:12px;height:1px"></div>
<div class="rt" style="left:34px;top:503px;width:2px;height:1px"></div>
<div class="rt" style="left:34px;top:506px;width:2px;height:1px"></div>
<div class="rt" style="left:34px;top:510px;width:2px;height:1px"></div>
<div class="rt" style="left:32px;top:514px;width:4px;height:1px"></div>
<div class="rt" style="left:34px;top:517px;width:2px;height:1px"></div>
<div class="rt" style="left:34px;top:521px;width:2px;height:1px"></div>
<div class="rt" style="left:34px;top:524px;width:2px;height:1px"></div>
<div class="t" style="left:26.5px;top:500.46px;font-size:8px;color:#a6a6a6;font-family:'Liberation Sans',sans-serif;transform:scaleX(0.944);transform-origin:0 0;">2</div>
<div class="t" style="left:26.5px;top:507.76px;font-size:8px;color:#a6a6a6;font-family:'Liberation Sans',sans-serif;transform:scaleX(0.944);transform-origin:0 0;">2</div>
<div class="t" style="left:26.5px;top:515.06px;font-size:8px;color:#a6a6a6;font-family:'Liberation Sans',sans-serif;transform:scaleX(0.944);transform-origin:0 0;">0</div>
<div class="t" style="left:26.5px;top:522.36px;font-size:8px;color:#a6a6a6;font-family:'Liberation Sans',sans-serif;transform:scaleX(0.944);transform-origin:0 0;">0</div>
<div class="rt" style="left:24px;top:528px;width:12px;height:1px"></div>
<div class="rt" style="left:34px;top:531px;width:2px;height:1px"></div>
<div class="rt" style="left:34px;top:535px;width:2px;height:1px"></div>
<div class="rt" style="left:34px;top:538px;width:2px;height:1px"></div>
<div class="rt" style="left:32px;top:542px;width:4px;height:1px"></div>
<div class="rt" style="left:34px;top:546px;width:2px;height:1px"></div>
<div class="rt" style="left:34px;top:549px;width:2px;height:1px"></div>
<div class="rt" style="left:34px;top:553px;width:2px;height:1px"></div>
<div class="t" style="left:26.5px;top:529.46px;font-size:8px;color:#a6a6a6;font-family:'Liberation Sans',sans-serif;transform:scaleX(0.944);transform-origin:0 0;">2</div>
<div class="t" style="left:26.5px;top:536.76px;font-size:8px;color:#a6a6a6;font-family:'Liberation Sans',sans-serif;transform:scaleX(0.944);transform-origin:0 0;">4</div>
<div class="t" style="left:26.5px;top:544.06px;font-size:8px;color:#a6a6a6;font-family:'Liberation Sans',sans-serif;transform:scaleX(0.944);transform-origin:0 0;">0</div>
<div class="t" style="left:26.5px;top:551.36px;font-size:8px;color:#a6a6a6;font-family:'Liberation Sans',sans-serif;transform:scaleX(0.944);transform-origin:0 0;">0</div>
<div class="rt" style="left:24px;top:556px;width:12px;height:1px"></div>
<div class="rt" style="left:34px;top:560px;width:2px;height:1px"></div>
<div class="rt" style="left:34px;top:563px;width:2px;height:1px"></div>
<div class="rt" style="left:34px;top:567px;width:2px;height:1px"></div>
<div class="rt" style="left:32px;top:570px;width:4px;height:1px"></div>
<div class="rt" style="left:34px;top:574px;width:2px;height:1px"></div>
<div class="rt" style="left:34px;top:578px;width:2px;height:1px"></div>
<div class="rt" style="left:34px;top:581px;width:2px;height:1px"></div>
<div class="t" style="left:26.5px;top:557.46px;font-size:8px;color:#a6a6a6;font-family:'Liberation Sans',sans-serif;transform:scaleX(0.944);transform-origin:0 0;">2</div>
<div class="t" style="left:26.5px;top:564.76px;font-size:8px;color:#a6a6a6;font-family:'Liberation Sans',sans-serif;transform:scaleX(0.944);transform-origin:0 0;">6</div>
<div class="t" style="left:26.5px;top:572.06px;font-size:8px;color:#a6a6a6;font-family:'Liberation Sans',sans-serif;transform:scaleX(0.944);transform-origin:0 0;">0</div>
<div class="t" style="left:26.5px;top:579.36px;font-size:8px;color:#a6a6a6;font-family:'Liberation Sans',sans-serif;transform:scaleX(0.944);transform-origin:0 0;">0</div>
<div class="rt" style="left:24px;top:585px;width:12px;height:1px"></div>
<div class="rt" style="left:34px;top:588px;width:2px;height:1px"></div>
<div class="rt" style="left:34px;top:592px;width:2px;height:1px"></div>
<div class="rt" style="left:34px;top:595px;width:2px;height:1px"></div>
<div class="rt" style="left:32px;top:599px;width:4px;height:1px"></div>
<div class="rt" style="left:34px;top:602px;width:2px;height:1px"></div>
<div class="rt" style="left:34px;top:606px;width:2px;height:1px"></div>
<div class="rt" style="left:34px;top:609px;width:2px;height:1px"></div>
<div class="t" style="left:26.5px;top:586.46px;font-size:8px;color:#a6a6a6;font-family:'Liberation Sans',sans-serif;transform:scaleX(0.944);transform-origin:0 0;">2</div>
<div class="t" style="left:26.5px;top:593.76px;font-size:8px;color:#a6a6a6;font-family:'Liberation Sans',sans-serif;transform:scaleX(0.944);transform-origin:0 0;">8</div>
<div class="t" style="left:26.5px;top:601.06px;font-size:8px;color:#a6a6a6;font-family:'Liberation Sans',sans-serif;transform:scaleX(0.944);transform-origin:0 0;">0</div>
<div class="t" style="left:26.5px;top:608.36px;font-size:8px;color:#a6a6a6;font-family:'Liberation Sans',sans-serif;transform:scaleX(0.944);transform-origin:0 0;">0</div>
<div class="rt" style="left:24px;top:613px;width:12px;height:1px"></div>
<div class="rt" style="left:34px;top:617px;width:2px;height:1px"></div>
<div class="rt" style="left:34px;top:620px;width:2px;height:1px"></div>
<div class="rt" style="left:34px;top:624px;width:2px;height:1px"></div>
<div class="rt" style="left:32px;top:627px;width:4px;height:1px"></div>
<div class="rt" style="left:34px;top:631px;width:2px;height:1px"></div>
<div class="rt" style="left:34px;top:634px;width:2px;height:1px"></div>
<div class="rt" style="left:34px;top:638px;width:2px;height:1px"></div>
<div class="t" style="left:26.5px;top:614.46px;font-size:8px;color:#a6a6a6;font-family:'Liberation Sans',sans-serif;transform:scaleX(0.944);transform-origin:0 0;">3</div>
<div class="t" style="left:26.5px;top:621.76px;font-size:8px;color:#a6a6a6;font-family:'Liberation Sans',sans-serif;transform:scaleX(0.944);transform-origin:0 0;">0</div>
<div class="t" style="left:26.5px;top:629.06px;font-size:8px;color:#a6a6a6;font-family:'Liberation Sans',sans-serif;transform:scaleX(0.944);transform-origin:0 0;">0</div>
<div class="t" style="left:26.5px;top:636.36px;font-size:8px;color:#a6a6a6;font-family:'Liberation Sans',sans-serif;transform:scaleX(0.944);transform-origin:0 0;">0</div>
<div class="rt" style="left:24px;top:641px;width:12px;height:1px"></div>
<div class="rt" style="left:34px;top:645px;width:2px;height:1px"></div>
<div class="rt" style="left:34px;top:648px;width:2px;height:1px"></div>
<div class="rt" style="left:34px;top:652px;width:2px;height:1px"></div>
<div class="rt" style="left:32px;top:656px;width:4px;height:1px"></div>
<div class="rt" style="left:34px;top:659px;width:2px;height:1px"></div>
<div class="rt" style="left:34px;top:663px;width:2px;height:1px"></div>
<div class="rt" style="left:34px;top:666px;width:2px;height:1px"></div>
<div class="t" style="left:26.5px;top:642.46px;font-size:8px;color:#a6a6a6;font-family:'Liberation Sans',sans-serif;transform:scaleX(0.944);transform-origin:0 0;">3</div>
<div class="t" style="left:26.5px;top:649.76px;font-size:8px;color:#a6a6a6;font-family:'Liberation Sans',sans-serif;transform:scaleX(0.944);transform-origin:0 0;">2</div>
<div class="t" style="left:26.5px;top:657.06px;font-size:8px;color:#a6a6a6;font-family:'Liberation Sans',sans-serif;transform:scaleX(0.944);transform-origin:0 0;">0</div>
<div class="t" style="left:26.5px;top:664.36px;font-size:8px;color:#a6a6a6;font-family:'Liberation Sans',sans-serif;transform:scaleX(0.944);transform-origin:0 0;">0</div>
<div class="rt" style="left:24px;top:670px;width:12px;height:1px"></div>
<div class="rt" style="left:34px;top:673px;width:2px;height:1px"></div>
<div class="rt" style="left:34px;top:677px;width:2px;height:1px"></div>
<div class="rt" style="left:34px;top:680px;width:2px;height:1px"></div>
<div class="rt" style="left:32px;top:684px;width:4px;height:1px"></div>
<div class="rt" style="left:34px;top:688px;width:2px;height:1px"></div>
<div class="rt" style="left:34px;top:691px;width:2px;height:1px"></div>
<div class="rt" style="left:34px;top:695px;width:2px;height:1px"></div>
<div class="t" style="left:26.5px;top:671.46px;font-size:8px;color:#a6a6a6;font-family:'Liberation Sans',sans-serif;transform:scaleX(0.944);transform-origin:0 0;">3</div>
<div class="t" style="left:26.5px;top:678.76px;font-size:8px;color:#a6a6a6;font-family:'Liberation Sans',sans-serif;transform:scaleX(0.944);transform-origin:0 0;">4</div>
<div class="t" style="left:26.5px;top:686.06px;font-size:8px;color:#a6a6a6;font-family:'Liberation Sans',sans-serif;transform:scaleX(0.944);transform-origin:0 0;">0</div>
<div class="t" style="left:26.5px;top:693.36px;font-size:8px;color:#a6a6a6;font-family:'Liberation Sans',sans-serif;transform:scaleX(0.944);transform-origin:0 0;">0</div>
<div class="rt" style="left:24px;top:698px;width:12px;height:1px"></div>
<div class="rt" style="left:34px;top:702px;width:2px;height:1px"></div>
<div class="rt" style="left:34px;top:705px;width:2px;height:1px"></div>
<div class="rt" style="left:34px;top:709px;width:2px;height:1px"></div>
<div class="t" style="left:26.5px;top:699.46px;font-size:8px;color:#a6a6a6;font-family:'Liberation Sans',sans-serif;transform:scaleX(0.944);transform-origin:0 0;">3</div>
<div class="a" style="left:0px;top:40px;width:24px;height:680px;background:#535353;"></div>
<div class="a" style="left:0px;top:40px;width:1px;height:680px;background:#4a4a4a;"></div>
<div class="a" style="left:23px;top:49px;width:1px;height:663px;background:#3e3e3e;"></div>
<div class="a" style="left:0px;top:40px;width:24px;height:9px;background:#3c3c3c;"></div>
<div class="t" style="left:4px;top:40.97px;font-size:7px;color:#bbb;font-family:'Liberation Sans',sans-serif;">&#187;</div>
<div class="a" style="left:3px;top:62px;width:19px;height:16px;background:#3b3b3b;"></div>
<svg style="left:7.0px;top:65.0px;" width="10" height="10" viewBox="0 0 12 12"><path d="M6 0 L7.8 2 L6.6 2 L6.6 5.4 L10 5.4 L10 4.2 L12 6 L10 7.8 L10 6.6 L6.6 6.6 L6.6 10 L7.8 10 L6 12 L4.2 10 L5.4 10 L5.4 6.6 L2 6.6 L2 7.8 L0 6 L2 4.2 L2 5.4 L5.4 5.4 L5.4 2 L4.2 2 Z" fill="#d6d6d6"/></svg>
<svg style="left:18px;top:73px;" width="3" height="3" viewBox="0 0 3 3"><path d="M3 0 L3 3 L0 3 Z" fill="#9a9a9a"/></svg>
<svg style="left:7.0px;top:83.0px;" width="10" height="10" viewBox="0 0 12 12"><rect x="1" y="1.5" width="10" height="9" stroke="#d6d6d6" fill="none" stroke-width="1.1" stroke-dasharray="2 1.2"/></svg>
<svg style="left:18px;top:91px;" width="3" height="3" viewBox="0 0 3 3"><path d="M3 0 L3 3 L0 3 Z" fill="#9a9a9a"/></svg>
<svg style="left:7.0px;top:101.0px;" width="10" height="10" viewBox="0 0 12 12"><path d="M1 2 L6 5 L11 1 L9 7 L5 8 L3 11 L2 7 Z" stroke="#d6d6d6" fill="none" stroke-width="1.2"/></svg>
<svg style="left:18px;top:109px;" width="3" height="3" viewBox="0 0 3 3"><path d="M3 0 L3 3 L0 3 Z" fill="#9a9a9a"/></svg>
<svg style="left:7.0px;top:118.0px;" width="10" height="10" viewBox="0 0 12 12"><rect x="1" y="1" width="7" height="7" stroke="#d6d6d6" fill="none" stroke-width="1.2"/><path d="M6 6 L11 9 L8 9.5 L7 12 Z" fill="#d6d6d6"/></svg>
<svg style="left:18px;top:126px;" width="3" height="3" viewBox="0 0 3 3"><path d="M3 0 L3 3 L0 3 Z" fill="#9a9a9a"/></svg>
<svg style="left:7.0px;top:136.0px;" width="10" height="10" viewBox="0 0 12 12"><path d="M3 0 L3 9 L12 9 M0 3 L9 3 L9 12" stroke="#d6d6d6" fill="none" stroke-width="1.5"/></svg>
<svg style="left:18px;top:144px;" width="3" height="3" viewBox="0 0 3 3"><path d="M3 0 L3 3 L0 3 Z" fill="#9a9a9a"/></svg>
<svg style="left:7.0px;top:154.0px;" width="10" height="10" viewBox="0 0 12 12"><rect x="1" y="1" width="10" height="10" stroke="#d6d6d6" fill="none" stroke-width="1.2"/><path d="M1 1 L11 11 M11 1 L1 11" stroke="#d6d6d6" stroke-width="1"/><rect x="3" y="3" width="6" height="6" stroke="#d6d6d6" fill="none" stroke-width="1.2"/></svg>
<svg style="left:18px;top:162px;" width="3" height="3" viewBox="0 0 3 3"><path d="M3 0 L3 3 L0 3 Z" fill="#9a9a9a"/></svg>
<svg style="left:7.0px;top:172.0px;" width="10" height="10" viewBox="0 0 12 12"><path d="M2 11 L1 10 L7 4 L8 5 Z" fill="#d6d6d6"/><path d="M6 3 L9 0.5 L11.5 3 L9 6 Z" fill="#d6d6d6"/></svg>
<svg style="left:18px;top:180px;" width="3" height="3" viewBox="0 0 3 3"><path d="M3 0 L3 3 L0 3 Z" fill="#9a9a9a"/></svg>
<svg style="left:7.0px;top:190.0px;" width="10" height="10" viewBox="0 0 12 12"><path d="M1 8 L8 1 L11 4 L4 11 Z" fill="#d6d6d6"/><path d="M4 6 L6 8 M6 4 L8 6" stroke="#535353" stroke-width="0.8"/></svg>
<svg style="left:18px;top:198px;" width="3" height="3" viewBox="0 0 3 3"><path d="M3 0 L3 3 L0 3 Z" fill="#9a9a9a"/></svg>
<svg style="left:7.0px;top:208.0px;" width="10" height="10" viewBox="0 0 12 12"><path d="M11 1 L5 7 L6 8 Z" fill="#d6d6d6"/><path d="M4 7.5 C2 8 2 10 1 11 C3 11 5 10.5 5.5 9 Z" fill="#d6d6d6"/></svg>
<svg style="left:18px;top:216px;" width="3" height="3" viewBox="0 0 3 3"><path d="M3 0 L3 3 L0 3 Z" fill="#9a9a9a"/></svg>
<svg style="left:7.0px;top:226.0px;" width="10" height="10" viewBox="0 0 12 12"><circle cx="6" cy="3" r="2.5" fill="#d6d6d6"/><rect x="5" y="4" width="2" height="3" fill="#d6d6d6"/><rect x="1" y="7" width="10" height="3" fill="#d6d6d6"/><rect x="2" y="11" width="8" height="1" fill="#d6d6d6"/></svg>
<svg style="left:18px;top:234px;" width="3" height="3" viewBox="0 0 3 3"><path d="M3 0 L3 3 L0 3 Z" fill="#9a9a9a"/></svg>
<svg style="left:7.0px;top:245.0px;" width="10" height="10" viewBox="0 0 12 12"><path d="M11 1 L5 7 L6 8 Z" fill="#d6d6d6"/><path d="M4 7.5 C2 8 2 10 1 11 C3 11 5 10.5 5.5 9 Z" fill="#d6d6d6"/><path d="M1 4 C1 1 4 0 5 2" stroke="#d6d6d6" fill="none" stroke-width="1.2"/></svg>
<svg style="left:18px;top:253px;" width="3" height="3" viewBox="0 0 3 3"><path d="M3 0 L3 3 L0 3 Z" fill="#9a9a9a"/></svg>
<svg style="left:7.0px;top:263.0px;" width="10" height="10" viewBox="0 0 12 12"><path d="M1 8 L7 2 L11 6 L6 11 L3 11 Z" stroke="#d6d6d6" fill="none" stroke-width="1.2"/><path d="M1 12 L11 12" stroke="#d6d6d6" stroke-width="0.8"/></svg>
<svg style="left:18px;top:271px;" width="3" height="3" viewBox="0 0 3 3"><path d="M3 0 L3 3 L0 3 Z" fill="#9a9a9a"/></svg>
<svg style="left:7.0px;top:281.0px;" width="10" height="10" viewBox="0 0 12 12"><defs><linearGradient id="gg" x1="0" x2="1"><stop offset="0" stop-color="#eee"/><stop offset="1" stop-color="#555"/></linearGradient></defs><rect x="1" y="1" width="10" height="10" fill="url(#gg)" stroke="#d6d6d6" stroke-width="1"/></svg>
<svg style="left:18px;top:289px;" width="3" height="3" viewBox="0 0 3 3"><path d="M3 0 L3 3 L0 3 Z" fill="#9a9a9a"/></svg>
<svg style="left:7.0px;top:299.0px;" width="10" height="10" viewBox="0 0 12 12"><path d="M6 0.5 C8 4 10 6 10 8 C10 10.5 8 11.5 6 11.5 C4 11.5 2 10.5 2 8 C2 6 4 4 6 0.5 Z" fill="#d6d6d6"/></svg>
<svg style="left:18px;top:307px;" width="3" height="3" viewBox="0 0 3 3"><path d="M3 0 L3 3 L0 3 Z" fill="#9a9a9a"/></svg>
<svg style="left:7.0px;top:317.0px;" width="10" height="10" viewBox="0 0 12 12"><circle cx="7.5" cy="4.5" r="3.5" fill="#d6d6d6"/><path d="M5 7 L1 11" stroke="#d6d6d6" stroke-width="1.5"/></svg>
<svg style="left:18px;top:325px;" width="3" height="3" viewBox="0 0 3 3"><path d="M3 0 L3 3 L0 3 Z" fill="#9a9a9a"/></svg>
<svg style="left:7.0px;top:335.0px;" width="10" height="10" viewBox="0 0 12 12"><path d="M2 11 L3 6 L8 1 L11 4 L6 9 Z" stroke="#d6d6d6" fill="none" stroke-width="1.2"/><circle cx="5.5" cy="6.5" r="1" fill="#d6d6d6"/></svg>
<svg style="left:18px;top:343px;" width="3" height="3" viewBox="0 0 3 3"><path d="M3 0 L3 3 L0 3 Z" fill="#9a9a9a"/></svg>
<svg style="left:7.0px;top:353.0px;" width="10" height="10" viewBox="0 0 12 12"><path d="M1 1 L11 1 L11 3 M1 3 L1 1 M6 1 L6 11 M4 11 L8 11" stroke="#d6d6d6" fill="none" stroke-width="1.8"/></svg>
<svg style="left:18px;top:361px;" width="3" height="3" viewBox="0 0 3 3"><path d="M3 0 L3 3 L0 3 Z" fill="#9a9a9a"/></svg>
<svg style="left:7.0px;top:372.0px;" width="10" height="10" viewBox="0 0 12 12"><path d="M3 0 L3 11 L5.5 8.5 L7.5 12 L9 11 L7 7.5 L10 7.5 Z" fill="#d6d6d6"/></svg>
<svg style="left:18px;top:380px;" width="3" height="3" viewBox="0 0 3 3"><path d="M3 0 L3 3 L0 3 Z" fill="#9a9a9a"/></svg>
<svg style="left:7.0px;top:389.0px;" width="10" height="10" viewBox="0 0 12 12"><rect x="1" y="2" width="10" height="8" stroke="#d6d6d6" fill="#6a6a6a" stroke-width="1.2"/></svg>
<svg style="left:18px;top:397px;" width="3" height="3" viewBox="0 0 3 3"><path d="M3 0 L3 3 L0 3 Z" fill="#9a9a9a"/></svg>
<svg style="left:7.0px;top:407.0px;" width="10" height="10" viewBox="0 0 12 12"><path d="M3 11 L1 6 L2 5 L3.5 7 L3.5 2 L5 2 L5 6 L5 1 L6.5 1 L6.5 6 L6.5 1.5 L8 1.5 L8 6 L8 3 L9.5 3 L9.5 9 L8 11 Z" fill="#d6d6d6"/></svg>
<svg style="left:18px;top:415px;" width="3" height="3" viewBox="0 0 3 3"><path d="M3 0 L3 3 L0 3 Z" fill="#9a9a9a"/></svg>
<svg style="left:7.0px;top:425.0px;" width="10" height="10" viewBox="0 0 12 12"><circle cx="5" cy="5" r="3.8" stroke="#d6d6d6" fill="none" stroke-width="1.2"/><path d="M8 8 L11.5 11.5" stroke="#d6d6d6" stroke-width="1.8"/></svg>
<svg style="left:6px;top:447px;" width="12" height="4" viewBox="0 0 12 4"><circle cx="2" cy="2" r="1.4" fill="#d6d6d6"/><circle cx="6" cy="2" r="1.4" fill="#d6d6d6"/><circle cx="10" cy="2" r="1.4" fill="#d6d6d6"/></svg>
<svg style="left:4px;top:463px;" width="6" height="6" viewBox="0 0 6 6"><rect x="2" y="2" width="4" height="4" fill="#fff"/><rect x="0" y="0" width="4" height="4" fill="#111" stroke="#fff" stroke-width="0.7"/></svg>
<svg style="left:13px;top:462px;" width="7" height="7" viewBox="0 0 7 7"><path d="M1 2 L5 2 L5 6 M3 0 L1 2 L3 4" stroke="#d6d6d6" fill="none" stroke-width="0.9"/></svg>
<div class="a" style="left:9px;top:481px;width:11px;height:12px;background:#f4f4f4;border:1px solid #333;"></div>
<div class="a" style="left:3px;top:474px;width:11px;height:12px;background:#fafafa;border:1px solid #3a3a3a;"></div>
<svg style="left:6px;top:501px;" width="12" height="10" viewBox="0 0 12 10"><rect x="0.5" y="0.5" width="11" height="9" stroke="#cfcfcf" fill="none" stroke-width="1"/><rect x="3" y="3" width="6" height="4" stroke="#cfcfcf" fill="none" stroke-width="0.8"/></svg>
<svg style="left:6px;top:519px;" width="12" height="11" viewBox="0 0 12 11"><rect x="3.5" y="0.5" width="8" height="6" stroke="#cfcfcf" fill="#535353" stroke-width="1"/><rect x="0.5" y="3.5" width="8" height="6" stroke="#cfcfcf" fill="#535353" stroke-width="1"/></svg>
<div class="a" style="left:858px;top:40px;width:13px;height:680px;background:#4a4a4a;"></div>
<div class="a" style="left:857px;top:60px;width:1px;height:652px;background:#2c2c2c;"></div>
<div class="a" style="left:869px;top:48px;width:2px;height:672px;background:#424242;"></div>
<div class="a" style="left:871px;top:48px;width:24px;height:672px;background:#535353;"></div>
<div class="a" style="left:895px;top:48px;width:1px;height:672px;background:#3c3c3c;"></div>
<div class="a" style="left:869px;top:40px;width:211px;height:8px;background:#3d3d3d;"></div>
<div class="t" style="left:885px;top:40.97px;font-size:7px;color:#bdbdbd;font-family:'Liberation Sans',sans-serif;">&#187;</div>
<div class="t" style="left:1065px;top:40.97px;font-size:7px;color:#bdbdbd;font-family:'Liberation Sans',sans-serif;">&#187;</div>
<div class="a" style="left:872px;top:98px;width:22px;height:2px;background:#474747;"></div>
<div class="a" style="left:872px;top:146px;width:22px;height:2px;background:#474747;"></div>
<div class="a" style="left:872px;top:176px;width:22px;height:2px;background:#474747;"></div>
<div class="a" style="left:872px;top:201px;width:22px;height:2px;background:#474747;"></div>
<svg style="left:877px;top:57px;" width="14" height="14" viewBox="0 0 14 14"><path d="M0 1 L4 1 M0 3.5 L4 3.5 M0 6 L4 6 M0 8.5 L4 8.5" stroke="#dedede" stroke-width="0.9"/><path d="M13 1 L6 8.5 L7.5 10 Z" fill="#dedede"/><path d="M5.5 9 C3.5 9.5 3.5 12 2.5 13.5 C5 13.5 7 12.5 7 10.5 Z" fill="#dedede"/></svg>
<svg style="left:877px;top:78px;" width="14" height="13" viewBox="0 0 14 13"><path d="M0 3 L13 3 M0 9 L13 9" stroke="#dedede" stroke-width="1.2"/><circle cx="4" cy="3" r="2.2" fill="#dedede"/><path d="M8 9 L12 6 L12 12 Z" fill="#dedede"/></svg>
<div class="t" style="left:877px;top:107.44px;font-size:11px;color:#dedede;font-family:'Liberation Sans',sans-serif;">A</div>
<div class="a" style="left:889px;top:106px;width:1px;height:14px;background:#dedede;"></div>
<div class="t" style="left:878px;top:125.44px;font-size:11px;color:#dedede;font-family:'Liberation Serif',serif;font-weight:bold;">&#182;</div>
<div class="t" style="left:877px;top:153.94px;font-size:12px;color:#dedede;font-family:'Liberation Serif',serif;">&#x211B;</div>
<svg style="left:877px;top:182px;" width="13" height="14" viewBox="0 0 13 14"><path d="M6.5 1 L12 4 L12 10 L6.5 13 L1 10 L1 4 Z M1 4 L6.5 7 L12 4 M6.5 7 L6.5 13" stroke="#dedede" fill="none" stroke-width="1.1"/></svg>
<div class="a" style="left:896px;top:48px;width:179px;height:336px;background:#535353;"></div>
<div class="a" style="left:896px;top:48px;width:179px;height:20px;background:#424242;"></div>
<div class="a" style="left:1009.5px;top:48px;width:39.5px;height:20px;background:#535353;"></div>
<div class="t" style="left:901.4px;top:54.47px;font-size:7px;color:#a9a9a9;font-family:'Liberation Sans',sans-serif;transform:scaleX(0.871);transform-origin:0 0;">Swatc</div>
<div class="t" style="left:924px;top:54.47px;font-size:7px;color:#a9a9a9;font-family:'Liberation Sans',sans-serif;transform:scaleX(0.993);transform-origin:0 0;">Gradi</div>
<div class="t" style="left:946.7px;top:54.47px;font-size:7px;color:#a9a9a9;font-family:'Liberation Sans',sans-serif;transform:scaleX(0.926);transform-origin:0 0;">Patter</div>
<div class="t" style="left:969px;top:54.47px;font-size:7px;color:#a9a9a9;font-family:'Liberation Sans',sans-serif;transform:scaleX(1.116);transform-origin:0 0;">Histo</div>
<div class="t" style="left:992px;top:54.47px;font-size:7px;color:#a9a9a9;font-family:'Liberation Sans',sans-serif;transform:scaleX(1.137);transform-origin:0 0;">Actio</div>
<div class="t" style="left:1014px;top:54.31px;font-size:7.3px;color:#f0f0f0;font-family:'Liberation Sans',sans-serif;font-weight:bold;transform:scaleX(0.859);transform-origin:0 0;">Properties</div>
<svg style="left:1065px;top:55px;" width="7" height="6" viewBox="0 0 7 6"><path d="M0 0.5 L7 0.5 M0 3 L7 3 M0 5.5 L7 5.5" stroke="#bbb" stroke-width="1"/></svg>
<div class="a" style="left:903px;top:72px;width:13.5px;height:15px;background:#3a3a3a;"></div>
<svg style="left:906px;top:75px;" width="8" height="10" viewBox="0 0 8 10"><path d="M0.5 0.5 L5 0.5 L7.5 3 L7.5 9.5 L0.5 9.5 Z M5 0.5 L5 3 L7.5 3" stroke="#ddd" fill="none" stroke-width="0.9"/></svg>
<div class="t" style="left:920px;top:78.47px;font-size:7px;color:#d8d8d8;font-family:'Liberation Sans',sans-serif;transform:scaleX(0.909);transform-origin:0 0;">Document</div>
<div class="a" style="left:896px;top:90px;width:170px;height:2px;background:#4a4a4a;"></div>
<div class="a" style="left:1066px;top:92px;width:8px;height:276px;background:#4a4a4a;"></div>
<div class="a" style="left:1067px;top:101px;width:6px;height:226px;background:#6c6c6c;"></div>
<svg style="left:1067px;top:94px;" width="6" height="4" viewBox="0 0 6 4"><path d="M0.5 3.5 L3 1 L5.5 3.5" stroke="#888" fill="none" stroke-width="0.9"/></svg>
<svg style="left:1067px;top:359px;" width="6" height="4" viewBox="0 0 6 4"><path d="M0.5 0.5 L3 3 L5.5 0.5" stroke="#888" fill="none" stroke-width="0.9"/></svg>
<svg style="left:903px;top:100.5px;" width="6" height="4" viewBox="0 0 6 4"><path d="M0.5 0.5 L3 3 L5.5 0.5" stroke="#8a8a8a" fill="none" stroke-width="1"/></svg>
<div class="t" style="left:909.5px;top:98.71px;font-size:7.5px;color:#eaeaea;font-family:'Liberation Sans',sans-serif;font-weight:bold;transform:scaleX(0.862);transform-origin:0 0;">Canvas</div>
<div class="t" style="left:930px;top:115.47px;font-size:7px;color:#bbb;font-family:'Liberation Sans',sans-serif;transform:scaleX(0.908);transform-origin:0 0;">W</div>
<div class="a" style="left:939px;top:113.5px;width:30px;height:11px;background:#434343;"></div>
<div class="t" style="left:941.5px;top:115.47px;font-size:7px;color:#e0e0e0;font-family:'Liberation Sans',sans-serif;transform:scaleX(0.843);transform-origin:0 0;">2232 px</div>
<div class="t" style="left:979px;top:115.47px;font-size:7px;color:#bbb;font-family:'Liberation Sans',sans-serif;transform:scaleX(1.071);transform-origin:0 0;">X</div>
<div class="a" style="left:989px;top:113.5px;width:31px;height:11px;background:#4e4e4e;"></div>
<div class="t" style="left:992px;top:115.47px;font-size:7px;color:#6a6a6a;font-family:'Liberation Sans',sans-serif;transform:scaleX(0.907);transform-origin:0 0;">0 px</div>
<div class="t" style="left:930px;top:133.47px;font-size:7px;color:#bbb;font-family:'Liberation Sans',sans-serif;transform:scaleX(1.088);transform-origin:0 0;">H</div>
<div class="a" style="left:939px;top:131.5px;width:30px;height:11px;background:#434343;"></div>
<div class="t" style="left:941.5px;top:133.47px;font-size:7px;color:#e0e0e0;font-family:'Liberation Sans',sans-serif;transform:scaleX(0.843);transform-origin:0 0;">2894 px</div>
<div class="t" style="left:979px;top:133.47px;font-size:7px;color:#bbb;font-family:'Liberation Sans',sans-serif;transform:scaleX(1.071);transform-origin:0 0;">Y</div>
<div class="a" style="left:989px;top:131.5px;width:31px;height:11px;background:#4e4e4e;"></div>
<div class="t" style="left:992px;top:133.47px;font-size:7px;color:#6a6a6a;font-family:'Liberation Sans',sans-serif;transform:scaleX(0.907);transform-origin:0 0;">0 px</div>
<svg style="left:907px;top:123px;" width="6" height="12" viewBox="0 0 6 12"><circle cx="3" cy="3" r="2.2" stroke="#aaa" fill="none" stroke-width="1"/><circle cx="3" cy="9" r="2.2" stroke="#aaa" fill="none" stroke-width="1"/></svg>
<div class="a" style="left:939.5px;top:151.5px;width:13px;height:15px;background:#383838;"></div>
<svg style="left:942px;top:154px;" width="8" height="10" viewBox="0 0 8 10"><rect x="0.5" y="0.5" width="7" height="9" stroke="#ddd" fill="none" stroke-width="0.9"/><circle cx="4" cy="3.5" r="1.3" fill="#ddd"/><path d="M1.5 9 L1.5 7 C1.5 5.5 6.5 5.5 6.5 7 L6.5 9 Z" fill="#ddd"/></svg>
<svg style="left:957px;top:154px;" width="11" height="9" viewBox="0 0 11 9"><rect x="0.5" y="0.5" width="10" height="8" stroke="#ddd" fill="none" stroke-width="0.9"/><circle cx="5.5" cy="3.3" r="1.3" fill="#ddd"/><path d="M3 8.5 L3 6.5 C3 5 8 5 8 6.5 L8 8.5 Z" fill="#ddd"/></svg>
<div class="t" style="left:938px;top:176.47px;font-size:7px;color:#d4d4d4;font-family:'Liberation Sans',sans-serif;transform:scaleX(0.889);transform-origin:0 0;">Resolution: 250 pixels/inch</div>
<div class="t" style="left:918px;top:193.47px;font-size:7px;color:#bbb;font-family:'Liberation Sans',sans-serif;transform:scaleX(0.857);transform-origin:0 0;">Mode</div>
<div class="a" style="left:939px;top:192px;width:82px;height:13px;background:#454545;border-radius:1px;"></div>
<div class="t" style="left:942px;top:195.07px;font-size:6.8px;color:#dcdcdc;font-family:'Liberation Sans',sans-serif;transform:scaleX(0.821);transform-origin:0 0;">RGB Color</div>
<svg style="left:1013px;top:197.0px;" width="6" height="4" viewBox="0 0 6 4"><path d="M0.5 0.5 L3 3 L5.5 0.5" stroke="#9a9a9a" fill="none" stroke-width="1"/></svg>
<div class="a" style="left:939px;top:209px;width:82px;height:13px;background:#454545;border-radius:1px;"></div>
<div class="t" style="left:942px;top:212.07px;font-size:6.8px;color:#dcdcdc;font-family:'Liberation Sans',sans-serif;transform:scaleX(0.896);transform-origin:0 0;">16 Bits/Channel</div>
<svg style="left:1013px;top:214.0px;" width="6" height="4" viewBox="0 0 6 4"><path d="M0.5 0.5 L3 3 L5.5 0.5" stroke="#9a9a9a" fill="none" stroke-width="1"/></svg>
<div class="t" style="left:926.5px;top:231.47px;font-size:7px;color:#999;font-family:'Liberation Sans',sans-serif;transform:scaleX(0.783);transform-origin:0 0;">Fill</div>
<div class="a" style="left:939px;top:229px;width:11.5px;height:12px;background:#4a4a4a;border:1px solid #444;"></div>
<div class="a" style="left:954px;top:229px;width:67px;height:13px;background:#454545;border-radius:1px;"></div>
<div class="t" style="left:957px;top:232.07px;font-size:6.8px;color:#dcdcdc;font-family:'Liberation Sans',sans-serif;transform:scaleX(0.934);transform-origin:0 0;">Transparent</div>
<svg style="left:1013px;top:234.0px;" width="6" height="4" viewBox="0 0 6 4"><path d="M0.5 0.5 L3 3 L5.5 0.5" stroke="#9a9a9a" fill="none" stroke-width="1"/></svg>
<div class="a" style="left:896px;top:246px;width:170px;height:2px;background:#4a4a4a;"></div>
<svg style="left:903px;top:256.5px;" width="6" height="4" viewBox="0 0 6 4"><path d="M0.5 0.5 L3 3 L5.5 0.5" stroke="#8a8a8a" fill="none" stroke-width="1"/></svg>
<div class="t" style="left:911px;top:254.71px;font-size:7.5px;color:#eaeaea;font-family:'Liberation Sans',sans-serif;font-weight:bold;transform:scaleX(0.838);transform-origin:0 0;">Rulers &amp; Grids</div>
<div class="a" style="left:904px;top:271.5px;width:13.5px;height:14px;background:#383838;"></div>
<svg style="left:906px;top:274px;" width="10" height="10" viewBox="0 0 10 10"><path d="M0.5 10 L0.5 0.5 L10 0.5" stroke="#e6e6e6" fill="none" stroke-width="2"/><path d="M3 3 L10 3" stroke="#bbb" stroke-width="0.8" stroke-dasharray="1 1"/></svg>
<svg style="left:926px;top:273px;" width="11" height="11" viewBox="0 0 11 11"><path d="M0.5 0.5 H10.5 V10.5 H0.5 Z M4 0.5 V10.5 M7 0.5 V10.5 M0.5 4 H10.5 M0.5 7 H10.5" stroke="#cfcfcf" fill="none" stroke-width="0.9"/></svg>
<svg style="left:946px;top:273px;" width="11" height="12" viewBox="0 0 11 12"><rect x="0.5" y="0.5" width="10" height="11" stroke="#cfcfcf" fill="none" stroke-width="0.9" stroke-dasharray="1.2 0.8"/><circle cx="3.5" cy="4" r="1.3" fill="#aaa"/><circle cx="7.5" cy="8" r="1.3" fill="#aaa"/></svg>
<div class="a" style="left:975px;top:272px;width:46px;height:12.5px;background:#454545;border-radius:1px;"></div>
<div class="t" style="left:978px;top:274.82px;font-size:6.8px;color:#dcdcdc;font-family:'Liberation Sans',sans-serif;transform:scaleX(0.882);transform-origin:0 0;">Pixels</div>
<svg style="left:1013px;top:276.75px;" width="6" height="4" viewBox="0 0 6 4"><path d="M0.5 0.5 L3 3 L5.5 0.5" stroke="#9a9a9a" fill="none" stroke-width="1"/></svg>
<div class="a" style="left:896px;top:293.5px;width:170px;height:2px;background:#4a4a4a;"></div>
<svg style="left:903px;top:303.5px;" width="6" height="4" viewBox="0 0 6 4"><path d="M0.5 0.5 L3 3 L5.5 0.5" stroke="#8a8a8a" fill="none" stroke-width="1"/></svg>
<div class="t" style="left:910px;top:301.71px;font-size:7.5px;color:#eaeaea;font-family:'Liberation Sans',sans-serif;font-weight:bold;transform:scaleX(0.846);transform-origin:0 0;">Guides</div>
<div class="a" style="left:904px;top:318.5px;width:13.5px;height:14px;background:#383838;"></div>
<svg style="left:906px;top:321px;" width="10" height="10" viewBox="0 0 10 10"><path d="M3 0 V10 M6 0 V10 M0 3.5 H10 M0 6.5 H10" stroke="#ddd" stroke-width="0.9"/></svg>
<svg style="left:926px;top:320px;" width="12" height="11" viewBox="0 0 12 11"><path d="M2 0 V11 M5 0 V11 M0 4 H8 M0 7 H6" stroke="#ddd" stroke-width="0.9"/><rect x="7" y="7" width="5" height="4" fill="#ddd"/></svg>
<div class="a" style="left:944px;top:318.5px;width:14px;height:14px;background:#383838;"></div>
<svg style="left:946px;top:320px;" width="10" height="11" viewBox="0 0 10 11"><path d="M2 0 V11 M0 3 L8 3 M6 5 V10" stroke="#ddd" stroke-width="0.9"/><path d="M4 8 L8 8 L6 11 Z" fill="#ddd"/></svg>
<div class="a" style="left:975px;top:320px;width:46px;height:13px;background:#454545;border-radius:1px;"></div>
<div class="a" style="left:979px;top:326px;width:25px;height:1.5px;background:#dcdcdc;"></div>
<svg style="left:1013px;top:325px;" width="6" height="4" viewBox="0 0 6 4"><path d="M0.5 0.5 L3 3 L5.5 0.5" stroke="#9a9a9a" fill="none" stroke-width="1"/></svg>
<div class="a" style="left:896px;top:340.5px;width:170px;height:2px;background:#4a4a4a;"></div>
<svg style="left:903px;top:350.5px;" width="6" height="4" viewBox="0 0 6 4"><path d="M0.5 0.5 L3 3 L5.5 0.5" stroke="#8a8a8a" fill="none" stroke-width="1"/></svg>
<div class="t" style="left:911px;top:348.71px;font-size:7.5px;color:#eaeaea;font-family:'Liberation Sans',sans-serif;font-weight:bold;transform:scaleX(0.837);transform-origin:0 0;">Quick Actions</div>
<div class="a" style="left:896px;top:384px;width:179px;height:4px;background:#3a3a3a;"></div>
<div class="a" style="left:896px;top:388px;width:179px;height:332px;background:#535353;"></div>
<div class="a" style="left:896px;top:388px;width:179px;height:19px;background:#424242;"></div>
<div class="a" style="left:896px;top:388px;width:31px;height:19px;background:#535353;"></div>
<div class="t" style="left:901.5px;top:393.81px;font-size:7.3px;color:#f0f0f0;font-family:'Liberation Sans',sans-serif;font-weight:bold;transform:scaleX(0.807);transform-origin:0 0;">Layers</div>
<svg style="left:1065px;top:394.5px;" width="7" height="6" viewBox="0 0 7 6"><path d="M0 0.5 L7 0.5 M0 3 L7 3 M0 5.5 L7 5.5" stroke="#bbb" stroke-width="1"/></svg>
<div class="a" style="left:899px;top:414px;width:54px;height:12px;background:#424242;border-radius:1px;"></div>
<svg style="left:902px;top:416px;" width="7" height="8" viewBox="0 0 7 8"><circle cx="3" cy="3" r="2.2" stroke="#e6e6e6" fill="none" stroke-width="1.2"/><path d="M4.5 4.5 L6.5 7" stroke="#e6e6e6" stroke-width="1.4"/></svg>
<div class="t" style="left:911px;top:416.46px;font-size:7px;color:#e0e0e0;font-family:'Liberation Sans',sans-serif;transform:scaleX(0.928);transform-origin:0 0;">Kind</div>
<svg style="left:944px;top:418.5px;" width="6" height="4" viewBox="0 0 6 4"><path d="M0.5 0.5 L3 3 L5.5 0.5" stroke="#888" fill="none" stroke-width="1"/></svg>
<svg style="left:959px;top:415px;" width="10" height="10" viewBox="0 0 10 10"><rect x="0.5" y="0.5" width="9" height="9" stroke="#dadada" fill="none" stroke-width="1"/><path d="M2 8 L4 5 L6 7 L8 4 L8 8 Z" fill="#dadada"/></svg>
<svg style="left:973px;top:415px;" width="10" height="10" viewBox="0 0 10 10"><circle cx="5" cy="5" r="4.3" stroke="#dadada" fill="none" stroke-width="1"/><path d="M5 0.7 A4.3 4.3 0 0 0 5 9.3 Z" fill="#dadada" transform="rotate(45 5 5)"/></svg>
<svg style="left:989px;top:414px;" width="10" height="11" viewBox="0 0 10 11"><path d="M0.8 2.5 L0.8 0.8 L9.2 0.8 L9.2 2.5 M5 0.8 L5 10 M3 10 L7 10" stroke="#dadada" fill="none" stroke-width="1.3"/></svg>
<svg style="left:1004px;top:415px;" width="10" height="10" viewBox="0 0 10 10"><rect x="2" y="2" width="6" height="6" stroke="#dadada" fill="none" stroke-width="1"/><path d="M2 0 V10 M8 0 V10 M0 2 H10 M0 8 H10" stroke="#dadada" stroke-width="0.8"/></svg>
<svg style="left:1019px;top:415px;" width="10" height="10" viewBox="0 0 10 10"><path d="M1 4 L5 1 L9 1 L9 9 L1 9 Z" stroke="#dadada" fill="none" stroke-width="1"/><rect x="1" y="5" width="4" height="4" fill="#dadada"/></svg>
<svg style="left:1034px;top:412px;" width="8" height="12" viewBox="0 0 8 12"><circle cx="4" cy="3.5" r="3" fill="#f0f0f0"/><rect x="3.5" y="6" width="1" height="5" fill="#444"/></svg>
<div class="a" style="left:896px;top:428.5px;width:179px;height:1px;background:#494949;"></div>
<div class="a" style="left:899px;top:433px;width:79px;height:12px;background:#4e4e4e;border-radius:1px;"></div>
<div class="t" style="left:903px;top:435.46px;font-size:7px;color:#6e6e6e;font-family:'Liberation Sans',sans-serif;transform:scaleX(0.931);transform-origin:0 0;">Normal</div>
<div class="t" style="left:983px;top:435.46px;font-size:7px;color:#747474;font-family:'Liberation Sans',sans-serif;transform:scaleX(0.857);transform-origin:0 0;">Opacity:</div>
<div class="a" style="left:1010px;top:433.5px;width:20px;height:11px;background:#4a4a4a;"></div>
<div class="a" style="left:1030px;top:433.5px;width:10px;height:11px;background:#4f4f4f;"></div>
<div class="t" style="left:1012px;top:435.72px;font-size:6.5px;color:#6a6a6a;font-family:'Liberation Sans',sans-serif;transform:scaleX(0.902);transform-origin:0 0;">100%</div>
<div class="a" style="left:896px;top:447.5px;width:179px;height:1px;background:#494949;"></div>
<div class="t" style="left:899px;top:455.46px;font-size:7px;color:#747474;font-family:'Liberation Sans',sans-serif;transform:scaleX(0.777);transform-origin:0 0;">Lock:</div>
<svg style="left:920px;top:454px;" width="9" height="9" viewBox="0 0 9 9"><path d="M0.5 0.5 H8.5 V8.5 H0.5 Z M0.5 4.5 H8.5 M4.5 0.5 V8.5" stroke="#bbb" fill="none" stroke-width="0.9" stroke-dasharray="1.5 1"/></svg>
<svg style="left:932px;top:453px;" width="10" height="11" viewBox="0 0 10 11"><path d="M9.5 0.5 L4 6.5 L5 7.5 Z" fill="#cfcfcf"/><path d="M3.5 7 C2 7.5 2 9 1 10.5 C3 10.5 4.5 10 4.8 8.5 Z" fill="#cfcfcf"/></svg>
<svg style="left:946px;top:453px;" width="11" height="11" viewBox="0 0 11 11"><path d="M5.5 0 L7 1.7 L6 1.7 L6 5 L9.3 5 L9.3 4 L11 5.5 L9.3 7 L9.3 6 L6 6 L6 9.3 L7 9.3 L5.5 11 L4 9.3 L5 9.3 L5 6 L1.7 6 L1.7 7 L0 5.5 L1.7 4 L1.7 5 L5 5 L5 1.7 L4 1.7 Z" fill="#cfcfcf"/></svg>
<svg style="left:960px;top:453px;" width="11" height="11" viewBox="0 0 11 11"><path d="M2 0 V9 H11 M0 2 H9 V11" stroke="#cfcfcf" fill="none" stroke-width="1"/></svg>
<svg style="left:975px;top:453px;" width="9" height="11" viewBox="0 0 9 11"><path d="M2 5 V3 C2 0 7 0 7 3 V5" stroke="#cfcfcf" fill="none" stroke-width="1.2"/><rect x="0.5" y="5" width="8" height="6" fill="#cfcfcf"/></svg>
<div class="t" style="left:997px;top:455.46px;font-size:7px;color:#747474;font-family:'Liberation Sans',sans-serif;transform:scaleX(0.827);transform-origin:0 0;">Fill:</div>
<div class="a" style="left:1010px;top:453.5px;width:20px;height:11px;background:#4a4a4a;"></div>
<div class="a" style="left:1030px;top:453.5px;width:10px;height:11px;background:#4f4f4f;"></div>
<div class="t" style="left:1012px;top:455.72px;font-size:6.5px;color:#6a6a6a;font-family:'Liberation Sans',sans-serif;transform:scaleX(0.902);transform-origin:0 0;">100%</div>
<div class="a" style="left:896px;top:466.5px;width:179px;height:1px;background:#494949;"></div>
<div class="a" style="left:915px;top:467px;width:1px;height:241px;background:#4d4d4d;"></div>
<div class="a" style="left:896px;top:487px;width:170px;height:1px;background:#4a4a4a;"></div>
<div class="a" style="left:896px;top:515.5px;width:170px;height:1px;background:#4a4a4a;"></div>
<div class="a" style="left:896px;top:544px;width:170px;height:1px;background:#4a4a4a;"></div>
<div class="a" style="left:896px;top:572.5px;width:170px;height:1px;background:#4a4a4a;"></div>
<div class="a" style="left:896px;top:601px;width:170px;height:1px;background:#4a4a4a;"></div>
<div class="a" style="left:896px;top:629.5px;width:170px;height:1px;background:#4a4a4a;"></div>
<div class="a" style="left:896px;top:658px;width:170px;height:1px;background:#4a4a4a;"></div>
<div class="a" style="left:896px;top:686.5px;width:170px;height:1px;background:#4a4a4a;"></div>
<svg style="left:900.5px;top:475px;" width="10" height="6" viewBox="0 0 10 6"><path d="M0.5 3 C2.5 0 7.5 0 9.5 3 C7.5 6 2.5 6 0.5 3 Z" stroke="#a8a8a8" fill="none" stroke-width="1"/><circle cx="5" cy="3" r="1.4" fill="#a8a8a8"/></svg>
<svg style="left:926px;top:476px;" width="6" height="4" viewBox="0 0 6 4"><path d="M0.5 0.5 L3 3 L5.5 0.5" stroke="#aaa" fill="none" stroke-width="1"/></svg>
<svg style="left:935px;top:473px;" width="10" height="9" viewBox="0 0 10 9"><path d="M0.5 1 L4 1 L5 2.5 L9.5 2.5 L9.5 8.5 L0.5 8.5 Z" fill="#e8e8e8"/><path d="M0.5 3.5 H9.5" stroke="#535353" stroke-width="0.7"/></svg>
<div class="t" style="left:951px;top:474.46px;font-size:7px;color:#e6e6e6;font-family:'Liberation Sans',sans-serif;transform:scaleX(0.845);transform-origin:0 0;">edite text</div>
<svg style="left:900.5px;top:498.4px;" width="10" height="6" viewBox="0 0 10 6"><path d="M0.5 3 C2.5 0 7.5 0 9.5 3 C7.5 6 2.5 6 0.5 3 Z" stroke="#a8a8a8" fill="none" stroke-width="1"/><circle cx="5" cy="3" r="1.4" fill="#a8a8a8"/></svg>
<svg style="left:942px;top:495.4px;" width="10" height="12" viewBox="0 0 10 12"><path d="M0.8 3 L0.8 0.8 L9.2 0.8 L9.2 3 M5 0.8 L5 11 M3 11 L7 11" stroke="#e8e8e8" fill="none" stroke-width="1.3"/></svg>
<div class="t" style="left:963px;top:497.97px;font-size:6.8px;color:#e4e4e4;font-family:'Liberation Sans',sans-serif;transform:scaleX(0.838);transform-origin:0 0;">Layer 2</div>
<svg style="left:900.5px;top:527px;" width="10" height="6" viewBox="0 0 10 6"><path d="M0.5 3 C2.5 0 7.5 0 9.5 3 C7.5 6 2.5 6 0.5 3 Z" stroke="#a8a8a8" fill="none" stroke-width="1"/><circle cx="5" cy="3" r="1.4" fill="#a8a8a8"/></svg>
<div class="a" style="left:938px;top:519px;width:15.5px;height:21px;background:#fff;background-image:linear-gradient(45deg,#d0d0d0 25%,transparent 25%,transparent 75%,#d0d0d0 75%),linear-gradient(45deg,#d0d0d0 25%,transparent 25%,transparent 75%,#d0d0d0 75%);background-size:4px 4px;background-position:0 0,2px 2px;border:1px solid #2a2a2a;"></div>
<div class="a" style="left:940px;top:521px;width:3px;height:4px;background:#8a5a4a;"></div>
<div class="t" style="left:959px;top:526.57px;font-size:6.8px;color:#e4e4e4;font-family:'Liberation Sans',sans-serif;transform:scaleX(0.838);transform-origin:0 0;">Layer 3</div>
<svg style="left:900.5px;top:556px;" width="10" height="6" viewBox="0 0 10 6"><path d="M0.5 3 C2.5 0 7.5 0 9.5 3 C7.5 6 2.5 6 0.5 3 Z" stroke="#a8a8a8" fill="none" stroke-width="1"/><circle cx="5" cy="3" r="1.4" fill="#a8a8a8"/></svg>
<svg style="left:942px;top:553px;" width="10" height="12" viewBox="0 0 10 12"><path d="M0.8 3 L0.8 0.8 L9.2 0.8 L9.2 3 M5 0.8 L5 11 M3 11 L7 11" stroke="#e8e8e8" fill="none" stroke-width="1.3"/></svg>
<div class="t" style="left:963px;top:555.57px;font-size:6.8px;color:#e4e4e4;font-family:'Liberation Sans',sans-serif;transform:scaleX(0.989);transform-origin:0 0;">cita0000000...&lt;&lt;&lt;&lt;&lt;&lt;&lt;&lt;0 d</div>
<div class="a" style="left:901px;top:582.5px;width:9px;height:10px;background:#4e4e4e;border:1px solid #5a5a5a;"></div>
<svg style="left:942px;top:581.5px;" width="10" height="12" viewBox="0 0 10 12"><path d="M0.8 3 L0.8 0.8 L9.2 0.8 L9.2 3 M5 0.8 L5 11 M3 11 L7 11" stroke="#e8e8e8" fill="none" stroke-width="1.3"/></svg>
<div class="t" style="left:962px;top:584.07px;font-size:6.8px;color:#e4e4e4;font-family:'Liberation Sans',sans-serif;transform:scaleX(0.912);transform-origin:0 0;">1as</div>
<svg style="left:900.5px;top:613px;" width="10" height="6" viewBox="0 0 10 6"><path d="M0.5 3 C2.5 0 7.5 0 9.5 3 C7.5 6 2.5 6 0.5 3 Z" stroke="#a8a8a8" fill="none" stroke-width="1"/><circle cx="5" cy="3" r="1.4" fill="#a8a8a8"/></svg>
<svg style="left:942px;top:610px;" width="10" height="12" viewBox="0 0 10 12"><path d="M0.8 3 L0.8 0.8 L9.2 0.8 L9.2 3 M5 0.8 L5 11 M3 11 L7 11" stroke="#e8e8e8" fill="none" stroke-width="1.3"/></svg>
<div class="t" style="left:963px;top:612.57px;font-size:6.8px;color:#e4e4e4;font-family:'Liberation Sans',sans-serif;transform:scaleX(0.837);transform-origin:0 0;">169</div>
<svg style="left:900.5px;top:641.5px;" width="10" height="6" viewBox="0 0 10 6"><path d="M0.5 3 C2.5 0 7.5 0 9.5 3 C7.5 6 2.5 6 0.5 3 Z" stroke="#a8a8a8" fill="none" stroke-width="1"/><circle cx="5" cy="3" r="1.4" fill="#a8a8a8"/></svg>
<svg style="left:942px;top:638.5px;" width="10" height="12" viewBox="0 0 10 12"><path d="M0.8 3 L0.8 0.8 L9.2 0.8 L9.2 3 M5 0.8 L5 11 M3 11 L7 11" stroke="#e8e8e8" fill="none" stroke-width="1.3"/></svg>
<div class="t" style="left:963px;top:641.07px;font-size:6.8px;color:#e4e4e4;font-family:'Liberation Sans',sans-serif;transform:scaleX(0.883);transform-origin:0 0;">m</div>
<svg style="left:900.5px;top:670px;" width="10" height="6" viewBox="0 0 10 6"><path d="M0.5 3 C2.5 0 7.5 0 9.5 3 C7.5 6 2.5 6 0.5 3 Z" stroke="#a8a8a8" fill="none" stroke-width="1"/><circle cx="5" cy="3" r="1.4" fill="#a8a8a8"/></svg>
<svg style="left:942px;top:667px;" width="10" height="12" viewBox="0 0 10 12"><path d="M0.8 3 L0.8 0.8 L9.2 0.8 L9.2 3 M5 0.8 L5 11 M3 11 L7 11" stroke="#e8e8e8" fill="none" stroke-width="1.3"/></svg>
<div class="t" style="left:963px;top:669.57px;font-size:6.8px;color:#e4e4e4;font-family:'Liberation Sans',sans-serif;transform:scaleX(0.881);transform-origin:0 0;">129.6</div>
<svg style="left:900.5px;top:698.5px;" width="10" height="6" viewBox="0 0 10 6"><path d="M0.5 3 C2.5 0 7.5 0 9.5 3 C7.5 6 2.5 6 0.5 3 Z" stroke="#a8a8a8" fill="none" stroke-width="1"/><circle cx="5" cy="3" r="1.4" fill="#a8a8a8"/></svg>
<svg style="left:942px;top:695.5px;" width="10" height="12" viewBox="0 0 10 12"><path d="M0.8 3 L0.8 0.8 L9.2 0.8 L9.2 3 M5 0.8 L5 11 M3 11 L7 11" stroke="#e8e8e8" fill="none" stroke-width="1.3"/></svg>
<div class="t" style="left:963px;top:698.07px;font-size:6.8px;color:#e4e4e4;font-family:'Liberation Sans',sans-serif;transform:scaleX(0.793);transform-origin:0 0;">01.01.1990</div>
<div class="a" style="left:1066px;top:472px;width:8px;height:236px;background:#4a4a4a;"></div>
<div class="a" style="left:1067px;top:490px;width:6px;height:66px;background:#6c6c6c;"></div>
<svg style="left:1067px;top:474px;" width="6" height="4" viewBox="0 0 6 4"><path d="M0.5 3.5 L3 1 L5.5 3.5" stroke="#888" fill="none" stroke-width="0.9"/></svg>
<div class="a" style="left:896px;top:708px;width:179px;height:12px;background:#535353;"></div>
<div class="a" style="left:896px;top:707.5px;width:170px;height:1px;background:#4a4a4a;"></div>
<svg style="left:947px;top:711px;" width="10" height="6" viewBox="0 0 10 6"><rect x="0.5" y="0.5" width="5" height="5" rx="2.5" stroke="#9a9a9a" fill="none"/><rect x="4.5" y="0.5" width="5" height="5" rx="2.5" stroke="#9a9a9a" fill="none"/></svg>
<div class="t" style="left:966px;top:710.21px;font-size:7.5px;color:#9a9a9a;font-family:'Liberation Serif',serif;"><i>fx</i></div>
<svg style="left:981px;top:709px;" width="10" height="9" viewBox="0 0 10 9"><rect x="0.5" y="0.5" width="9" height="8" stroke="#ddd" fill="none" stroke-width="1"/><circle cx="5" cy="4.5" r="2.3" fill="#ddd"/></svg>
<svg style="left:998px;top:709px;" width="10" height="10" viewBox="0 0 10 10"><circle cx="5" cy="5" r="4.3" stroke="#ddd" fill="none" stroke-width="1"/><path d="M5 0.7 A4.3 4.3 0 0 0 5 9.3 Z" fill="#ddd" transform="rotate(45 5 5)"/></svg>
<svg style="left:1015px;top:709px;" width="10" height="9" viewBox="0 0 10 9"><path d="M0.5 1 L4 1 L5 2.5 L9.5 2.5 L9.5 8.5 L0.5 8.5 Z" fill="#e6e6e6"/></svg>
<svg style="left:1032px;top:709px;" width="10" height="10" viewBox="0 0 10 10"><rect x="0.5" y="0.5" width="9" height="9" stroke="#ddd" fill="none" stroke-width="1"/><path d="M5 2.5 V7.5 M2.5 5 H7.5" stroke="#ddd" stroke-width="1"/></svg>
<svg style="left:1050px;top:709px;" width="9" height="10" viewBox="0 0 9 10"><path d="M0 1.5 H9 M3 1.5 V0.5 H6 V1.5 M1 2 L1.7 9.5 H7.3 L8 2" stroke="#9a9a9a" fill="none" stroke-width="1"/></svg>
<div class="a" style="left:1075px;top:48px;width:2px;height:672px;background:#3c3c3c;"></div>
<div class="a" style="left:1077px;top:48px;width:3px;height:672px;background:#535353;"></div>
<div class="a" style="left:303px;top:186px;width:291px;height:413px;background:#2a2a2a;"></div>
<div class="a" style="left:304px;top:187px;width:289px;height:411px;background:#fff;background-image:conic-gradient(#cbcbcb 25%,#fff 0 50%,#cbcbcb 0 75%,#fff 0);background-size:10.1px 10.1px;background-position:0 0;"></div>
<div class="a" style="left:37px;top:209px;width:267px;height:1px;background:#263837;"></div>
<div class="a" style="left:37px;top:210px;width:267px;height:1px;background:#6f8a87;"></div>
<div class="a" style="left:37px;top:211px;width:267px;height:1px;background:#263837;"></div>
<div class="a" style="left:593px;top:209px;width:264px;height:1px;background:#263837;"></div>
<div class="a" style="left:593px;top:210px;width:264px;height:1px;background:#6f8a87;"></div>
<div class="a" style="left:593px;top:211px;width:264px;height:1px;background:#263837;"></div>
<div class="a" style="left:304px;top:208px;width:289px;height:5px;background:rgba(90,210,210,0.16);"></div>
<div class="a" style="left:304px;top:210px;width:289px;height:1px;background:#9fd6d3;"></div>
<div class="a" style="left:37px;top:573px;width:267px;height:1px;background:#263837;"></div>
<div class="a" style="left:37px;top:574px;width:267px;height:1px;background:#6f8a87;"></div>
<div class="a" style="left:37px;top:575px;width:267px;height:1px;background:#263837;"></div>
<div class="a" style="left:593px;top:573px;width:264px;height:1px;background:#263837;"></div>
<div class="a" style="left:593px;top:574px;width:264px;height:1px;background:#6f8a87;"></div>
<div class="a" style="left:593px;top:575px;width:264px;height:1px;background:#263837;"></div>
<div class="a" style="left:304px;top:572px;width:289px;height:5px;background:rgba(90,210,210,0.16);"></div>
<div class="a" style="left:304px;top:574px;width:289px;height:1px;background:#9fd6d3;"></div>
<div class="a" style="left:322px;top:73px;width:1px;height:114px;background:#263837;"></div>
<div class="a" style="left:323px;top:73px;width:1px;height:114px;background:#6f8a87;"></div>
<div class="a" style="left:324px;top:73px;width:1px;height:114px;background:#263837;"></div>
<div class="a" style="left:322px;top:598px;width:1px;height:114px;background:#263837;"></div>
<div class="a" style="left:323px;top:598px;width:1px;height:114px;background:#6f8a87;"></div>
<div class="a" style="left:324px;top:598px;width:1px;height:114px;background:#263837;"></div>
<div class="a" style="left:321px;top:187px;width:6px;height:411px;background:rgba(90,210,210,0.16);"></div>
<div class="a" style="left:323px;top:187px;width:1px;height:411px;background:#9fd6d3;"></div>
<div class="a" style="left:571px;top:73px;width:1px;height:114px;background:#263837;"></div>
<div class="a" style="left:572px;top:73px;width:1px;height:114px;background:#6f8a87;"></div>
<div class="a" style="left:573px;top:73px;width:1px;height:114px;background:#263837;"></div>
<div class="a" style="left:571px;top:598px;width:1px;height:114px;background:#263837;"></div>
<div class="a" style="left:572px;top:598px;width:1px;height:114px;background:#6f8a87;"></div>
<div class="a" style="left:573px;top:598px;width:1px;height:114px;background:#263837;"></div>
<div class="a" style="left:570px;top:187px;width:6px;height:411px;background:rgba(90,210,210,0.16);"></div>
<div class="a" style="left:572px;top:187px;width:1px;height:411px;background:#9fd6d3;"></div>
<div class="a" style="left:356px;top:234px;width:368px;height:252px;background:#1d2020;box-shadow:1px 1px 3px rgba(0,0,0,0.3);"></div>
<div class="a" style="left:360px;top:237px;width:360px;height:246px;background:#101616;"></div>
<div class="a" style="left:361px;top:238px;width:358px;height:244px;background:#c9d4d0;"></div>
<div class="a" style="left:361px;top:238px;width:358px;height:1px;background:#dfe8e5;"></div>
<div class="a" style="left:361px;top:239.5px;width:358px;height:4px;background:#b9c6c2;background-image:repeating-linear-gradient(90deg,#4a5b56 0 1.3px,#c3cfcb 1.3px 3px,#8b9c97 3px 4px,#d9e3df 4px 6.2px);"></div>
<div class="a" style="left:361px;top:244px;width:358px;height:1px;background:#dde7e4;"></div>
<div class="a" style="left:369px;top:245px;width:342px;height:1.5px;background:#a3ada6;"></div>
<div class="a" style="left:369px;top:473.5px;width:342px;height:1.5px;background:#a3ada6;"></div>
<div class="a" style="left:361px;top:475px;width:358px;height:1px;background:#dde7e4;"></div>
<div class="a" style="left:361px;top:476px;width:358px;height:3.5px;background:#b9c6c2;background-image:repeating-linear-gradient(90deg,#4a5b56 0 1.3px,#c3cfcb 1.3px 3px,#8b9c97 3px 4px,#d9e3df 4px 6.2px);"></div>
<div class="a" style="left:361px;top:480px;width:358px;height:1.5px;background:#dfe9e6;"></div>
<div class="a" style="left:361px;top:238px;width:1px;height:244px;background:#dfe8e5;"></div>
<div class="a" style="left:362.5px;top:240px;width:4px;height:240px;background:#b9c6c2;background-image:repeating-linear-gradient(180deg,#4a5b56 0 1.3px,#c3cfcb 1.3px 3px,#8b9c97 3px 4px,#d9e3df 4px 6.2px);"></div>
<div class="a" style="left:367px;top:246px;width:1px;height:228px;background:#dde7e4;"></div>
<div class="a" style="left:368px;top:246px;width:1.2px;height:228px;background:#a3ada6;"></div>
<div class="a" style="left:710.8px;top:246px;width:1.2px;height:228px;background:#a3ada6;"></div>
<div class="a" style="left:712px;top:246px;width:1px;height:228px;background:#dde7e4;"></div>
<div class="a" style="left:713.5px;top:240px;width:4px;height:240px;background:#b9c6c2;background-image:repeating-linear-gradient(180deg,#4a5b56 0 1.3px,#c3cfcb 1.3px 3px,#8b9c97 3px 4px,#d9e3df 4px 6.2px);"></div>
<div class="a" style="left:718px;top:238px;width:1px;height:244px;background:#dfe8e5;"></div>
<div class="a" style="left:369px;top:246.5px;width:341.8px;height:227px;background:#d4cbbf;background-image:radial-gradient(ellipse 60% 70% at 15% 85%,rgba(150,135,115,0.22),rgba(150,135,115,0) 70%),linear-gradient(100deg,rgba(200,190,175,0.35),rgba(220,212,202,0) 60%),linear-gradient(180deg,#d7d0c5,#d6cec4);"></div>
<svg style="left:361px;top:238px;" width="44" height="46" viewBox="0 0 44 46"><defs><linearGradient id="cg" x1="0" y1="0" x2="1" y2="1"><stop offset="0" stop-color="#dde6e3"/><stop offset="0.55" stop-color="#aebdb8"/><stop offset="1" stop-color="#7b8e88"/></linearGradient></defs><path d="M0 0 L40 0 L39.5 8 L31.5 19.5 L24.5 28 L18 36 L10.5 40 L6 41.5 L0 42 Z" fill="url(#cg)"/><ellipse cx="8" cy="12" rx="4.2" ry="9.5" transform="rotate(-35 8 12)" fill="#e6eeea"/><ellipse cx="8" cy="12" rx="0.5" ry="8.0" transform="rotate(-35 8 12)" fill="#475a55"/><ellipse cx="15.5" cy="9.5" rx="4.2" ry="9.5" transform="rotate(-8 15.5 9.5)" fill="#e6eeea"/><ellipse cx="15.5" cy="9.5" rx="0.5" ry="8.0" transform="rotate(-8 15.5 9.5)" fill="#475a55"/><ellipse cx="23" cy="10" rx="4" ry="9" transform="rotate(22 23 10)" fill="#e6eeea"/><ellipse cx="23" cy="10" rx="0.5" ry="7.5" transform="rotate(22 23 10)" fill="#475a55"/><ellipse cx="29.5" cy="13.5" rx="3.4" ry="8" transform="rotate(48 29.5 13.5)" fill="#e6eeea"/><ellipse cx="29.5" cy="13.5" rx="0.5" ry="6.5" transform="rotate(48 29.5 13.5)" fill="#475a55"/><ellipse cx="6" cy="24" rx="3.4" ry="7" transform="rotate(-70 6 24)" fill="#e6eeea"/><ellipse cx="6" cy="24" rx="0.5" ry="5.5" transform="rotate(-70 6 24)" fill="#475a55"/><path d="M11 20 L5 4 M18.5 19 L18.5 2 M21 21 L30 6 M23 23 L36 14" stroke="#475a55" stroke-width="1.1" fill="none"/><path d="M2 3 C3 10 2 20 1.5 38" stroke="#475a55" stroke-width="1" fill="none" stroke-dasharray="2 1.5"/><path d="M3 2 H38" stroke="#475a55" stroke-width="0.9" fill="none" stroke-dasharray="2 1.5"/><circle cx="17" cy="24" r="4.5" fill="#a7b7b2"/><path d="M13 22 C16 19 21 21 21 25" stroke="#475a55" stroke-width="1" fill="none"/><circle cx="13.5" cy="32" r="3.6" fill="#e6eeea" stroke="#475a55" stroke-width="1.1"/><circle cx="13.5" cy="32" r="1.2" fill="#475a55"/><path d="M5 30 C7 34 8 37 11 38 M20 30 C22 32 22 34 20 36" stroke="#475a55" stroke-width="1" fill="none"/><path d="M6 36 C8 38 5 40 3 39" stroke="#e6eeea" stroke-width="1.2" fill="none"/><path d="M39.5 8 L31.5 19.5 L24.5 28 L18 36 L10.5 40 L6 41.5" stroke="#5a6d67" stroke-width="1.3" fill="none"/><path d="M26 18 C24 22 22 24 19 25 M9 19 C11 21 12 23 11 26" stroke="#3e504b" stroke-width="1.4" fill="none"/></svg>
<svg style="left:675px;top:238px;transform:scaleX(-1);" width="44" height="46" viewBox="0 0 44 46"><defs><linearGradient id="cg" x1="0" y1="0" x2="1" y2="1"><stop offset="0" stop-color="#dde6e3"/><stop offset="0.55" stop-color="#aebdb8"/><stop offset="1" stop-color="#7b8e88"/></linearGradient></defs><path d="M0 0 L40 0 L39.5 8 L31.5 19.5 L24.5 28 L18 36 L10.5 40 L6 41.5 L0 42 Z" fill="url(#cg)"/><ellipse cx="8" cy="12" rx="4.2" ry="9.5" transform="rotate(-35 8 12)" fill="#e6eeea"/><ellipse cx="8" cy="12" rx="0.5" ry="8.0" transform="rotate(-35 8 12)" fill="#475a55"/><ellipse cx="15.5" cy="9.5" rx="4.2" ry="9.5" transform="rotate(-8 15.5 9.5)" fill="#e6eeea"/><ellipse cx="15.5" cy="9.5" rx="0.5" ry="8.0" transform="rotate(-8 15.5 9.5)" fill="#475a55"/><ellipse cx="23" cy="10" rx="4" ry="9" transform="rotate(22 23 10)" fill="#e6eeea"/><ellipse cx="23" cy="10" rx="0.5" ry="7.5" transform="rotate(22 23 10)" fill="#475a55"/><ellipse cx="29.5" cy="13.5" rx="3.4" ry="8" transform="rotate(48 29.5 13.5)" fill="#e6eeea"/><ellipse cx="29.5" cy="13.5" rx="0.5" ry="6.5" transform="rotate(48 29.5 13.5)" fill="#475a55"/><ellipse cx="6" cy="24" rx="3.4" ry="7" transform="rotate(-70 6 24)" fill="#e6eeea"/><ellipse cx="6" cy="24" rx="0.5" ry="5.5" transform="rotate(-70 6 24)" fill="#475a55"/><path d="M11 20 L5 4 M18.5 19 L18.5 2 M21 21 L30 6 M23 23 L36 14" stroke="#475a55" stroke-width="1.1" fill="none"/><path d="M2 3 C3 10 2 20 1.5 38" stroke="#475a55" stroke-width="1" fill="none" stroke-dasharray="2 1.5"/><path d="M3 2 H38" stroke="#475a55" stroke-width="0.9" fill="none" stroke-dasharray="2 1.5"/><circle cx="17" cy="24" r="4.5" fill="#a7b7b2"/><path d="M13 22 C16 19 21 21 21 25" stroke="#475a55" stroke-width="1" fill="none"/><circle cx="13.5" cy="32" r="3.6" fill="#e6eeea" stroke="#475a55" stroke-width="1.1"/><circle cx="13.5" cy="32" r="1.2" fill="#475a55"/><path d="M5 30 C7 34 8 37 11 38 M20 30 C22 32 22 34 20 36" stroke="#475a55" stroke-width="1" fill="none"/><path d="M6 36 C8 38 5 40 3 39" stroke="#e6eeea" stroke-width="1.2" fill="none"/><path d="M39.5 8 L31.5 19.5 L24.5 28 L18 36 L10.5 40 L6 41.5" stroke="#5a6d67" stroke-width="1.3" fill="none"/><path d="M26 18 C24 22 22 24 19 25 M9 19 C11 21 12 23 11 26" stroke="#3e504b" stroke-width="1.4" fill="none"/></svg>
<svg style="left:361px;top:436px;transform:scaleY(-1);" width="44" height="46" viewBox="0 0 44 46"><defs><linearGradient id="cg" x1="0" y1="0" x2="1" y2="1"><stop offset="0" stop-color="#dde6e3"/><stop offset="0.55" stop-color="#aebdb8"/><stop offset="1" stop-color="#7b8e88"/></linearGradient></defs><path d="M0 0 L40 0 L39.5 8 L31.5 19.5 L24.5 28 L18 36 L10.5 40 L6 41.5 L0 42 Z" fill="url(#cg)"/><ellipse cx="8" cy="12" rx="4.2" ry="9.5" transform="rotate(-35 8 12)" fill="#e6eeea"/><ellipse cx="8" cy="12" rx="0.5" ry="8.0" transform="rotate(-35 8 12)" fill="#475a55"/><ellipse cx="15.5" cy="9.5" rx="4.2" ry="9.5" transform="rotate(-8 15.5 9.5)" fill="#e6eeea"/><ellipse cx="15.5" cy="9.5" rx="0.5" ry="8.0" transform="rotate(-8 15.5 9.5)" fill="#475a55"/><ellipse cx="23" cy="10" rx="4" ry="9" transform="rotate(22 23 10)" fill="#e6eeea"/><ellipse cx="23" cy="10" rx="0.5" ry="7.5" transform="rotate(22 23 10)" fill="#475a55"/><ellipse cx="29.5" cy="13.5" rx="3.4" ry="8" transform="rotate(48 29.5 13.5)" fill="#e6eeea"/><ellipse cx="29.5" cy="13.5" rx="0.5" ry="6.5" transform="rotate(48 29.5 13.5)" fill="#475a55"/><ellipse cx="6" cy="24" rx="3.4" ry="7" transform="rotate(-70 6 24)" fill="#e6eeea"/><ellipse cx="6" cy="24" rx="0.5" ry="5.5" transform="rotate(-70 6 24)" fill="#475a55"/><path d="M11 20 L5 4 M18.5 19 L18.5 2 M21 21 L30 6 M23 23 L36 14" stroke="#475a55" stroke-width="1.1" fill="none"/><path d="M2 3 C3 10 2 20 1.5 38" stroke="#475a55" stroke-width="1" fill="none" stroke-dasharray="2 1.5"/><path d="M3 2 H38" stroke="#475a55" stroke-width="0.9" fill="none" stroke-dasharray="2 1.5"/><circle cx="17" cy="24" r="4.5" fill="#a7b7b2"/><path d="M13 22 C16 19 21 21 21 25" stroke="#475a55" stroke-width="1" fill="none"/><circle cx="13.5" cy="32" r="3.6" fill="#e6eeea" stroke="#475a55" stroke-width="1.1"/><circle cx="13.5" cy="32" r="1.2" fill="#475a55"/><path d="M5 30 C7 34 8 37 11 38 M20 30 C22 32 22 34 20 36" stroke="#475a55" stroke-width="1" fill="none"/><path d="M6 36 C8 38 5 40 3 39" stroke="#e6eeea" stroke-width="1.2" fill="none"/><path d="M39.5 8 L31.5 19.5 L24.5 28 L18 36 L10.5 40 L6 41.5" stroke="#5a6d67" stroke-width="1.3" fill="none"/><path d="M26 18 C24 22 22 24 19 25 M9 19 C11 21 12 23 11 26" stroke="#3e504b" stroke-width="1.4" fill="none"/></svg>
<svg style="left:675px;top:436px;transform:scale(-1,-1);" width="44" height="46" viewBox="0 0 44 46"><defs><linearGradient id="cg" x1="0" y1="0" x2="1" y2="1"><stop offset="0" stop-color="#dde6e3"/><stop offset="0.55" stop-color="#aebdb8"/><stop offset="1" stop-color="#7b8e88"/></linearGradient></defs><path d="M0 0 L40 0 L39.5 8 L31.5 19.5 L24.5 28 L18 36 L10.5 40 L6 41.5 L0 42 Z" fill="url(#cg)"/><ellipse cx="8" cy="12" rx="4.2" ry="9.5" transform="rotate(-35 8 12)" fill="#e6eeea"/><ellipse cx="8" cy="12" rx="0.5" ry="8.0" transform="rotate(-35 8 12)" fill="#475a55"/><ellipse cx="15.5" cy="9.5" rx="4.2" ry="9.5" transform="rotate(-8 15.5 9.5)" fill="#e6eeea"/><ellipse cx="15.5" cy="9.5" rx="0.5" ry="8.0" transform="rotate(-8 15.5 9.5)" fill="#475a55"/><ellipse cx="23" cy="10" rx="4" ry="9" transform="rotate(22 23 10)" fill="#e6eeea"/><ellipse cx="23" cy="10" rx="0.5" ry="7.5" transform="rotate(22 23 10)" fill="#475a55"/><ellipse cx="29.5" cy="13.5" rx="3.4" ry="8" transform="rotate(48 29.5 13.5)" fill="#e6eeea"/><ellipse cx="29.5" cy="13.5" rx="0.5" ry="6.5" transform="rotate(48 29.5 13.5)" fill="#475a55"/><ellipse cx="6" cy="24" rx="3.4" ry="7" transform="rotate(-70 6 24)" fill="#e6eeea"/><ellipse cx="6" cy="24" rx="0.5" ry="5.5" transform="rotate(-70 6 24)" fill="#475a55"/><path d="M11 20 L5 4 M18.5 19 L18.5 2 M21 21 L30 6 M23 23 L36 14" stroke="#475a55" stroke-width="1.1" fill="none"/><path d="M2 3 C3 10 2 20 1.5 38" stroke="#475a55" stroke-width="1" fill="none" stroke-dasharray="2 1.5"/><path d="M3 2 H38" stroke="#475a55" stroke-width="0.9" fill="none" stroke-dasharray="2 1.5"/><circle cx="17" cy="24" r="4.5" fill="#a7b7b2"/><path d="M13 22 C16 19 21 21 21 25" stroke="#475a55" stroke-width="1" fill="none"/><circle cx="13.5" cy="32" r="3.6" fill="#e6eeea" stroke="#475a55" stroke-width="1.1"/><circle cx="13.5" cy="32" r="1.2" fill="#475a55"/><path d="M5 30 C7 34 8 37 11 38 M20 30 C22 32 22 34 20 36" stroke="#475a55" stroke-width="1" fill="none"/><path d="M6 36 C8 38 5 40 3 39" stroke="#e6eeea" stroke-width="1.2" fill="none"/><path d="M39.5 8 L31.5 19.5 L24.5 28 L18 36 L10.5 40 L6 41.5" stroke="#5a6d67" stroke-width="1.3" fill="none"/><path d="M26 18 C24 22 22 24 19 25 M9 19 C11 21 12 23 11 26" stroke="#3e504b" stroke-width="1.4" fill="none"/></svg>
<svg style="left:401px;top:231px;" width="9" height="7" viewBox="0 0 9 7"><path d="M0 6 C1 1 6 0 8 2" stroke="#c9d2cf" stroke-width="1.1" fill="none"/></svg>
<svg style="left:671px;top:231px;transform:scaleX(-1);" width="9" height="7" viewBox="0 0 9 7"><path d="M0 6 C1 1 6 0 8 2" stroke="#c9d2cf" stroke-width="1.1" fill="none"/></svg>
<svg style="left:355px;top:275px;" width="6" height="9" viewBox="0 0 6 9"><path d="M5 0 C0 1 0 7 4 8" stroke="#c9d2cf" stroke-width="1.1" fill="none"/></svg>
<svg style="left:719px;top:271px;" width="6" height="9" viewBox="0 0 6 9"><path d="M1 0 C6 1 6 7 2 8" stroke="#c9d2cf" stroke-width="1.1" fill="none"/></svg>
<svg style="left:355px;top:436px;" width="6" height="9" viewBox="0 0 6 9"><path d="M4 0 C0 1 0 7 5 8" stroke="#c9d2cf" stroke-width="1.1" fill="none"/></svg>
<svg style="left:719px;top:432px;" width="6" height="9" viewBox="0 0 6 9"><path d="M2 0 C6 1 6 7 1 8" stroke="#c9d2cf" stroke-width="1.1" fill="none"/></svg>
<svg style="left:401px;top:483px;" width="9" height="7" viewBox="0 0 9 7"><path d="M0 1 C1 6 6 7 8 5" stroke="#c9d2cf" stroke-width="1.1" fill="none"/></svg>
<svg style="left:671px;top:483px;" width="9" height="7" viewBox="0 0 9 7"><path d="M8 1 C7 6 2 7 0 5" stroke="#c9d2cf" stroke-width="1.1" fill="none"/></svg>
<svg style="left:520px;top:249px;" width="40" height="42" viewBox="0 0 40 42"><path d="M13.6 6.5 L2.5 6.6000000000000005 L2.5 7.8 L13.6 10.5 Z" fill="#121212"/><path d="M26.4 6.5 L37.5 6.6000000000000005 L37.5 7.8 L26.4 10.5 Z" fill="#121212"/><path d="M13.6 9 L1.8 10.4 L1.8 11.6 L13.6 13 Z" fill="#121212"/><path d="M26.4 9 L38.2 10.4 L38.2 11.6 L26.4 13 Z" fill="#121212"/><path d="M13.6 11.5 L1.5 14.4 L1.5 15.6 L13.6 15.5 Z" fill="#121212"/><path d="M26.4 11.5 L38.5 14.4 L38.5 15.6 L26.4 15.5 Z" fill="#121212"/><path d="M13.6 14 L2.5 18.9 L2.5 20.1 L13.6 18 Z" fill="#121212"/><path d="M26.4 14 L37.5 18.9 L37.5 20.1 L26.4 18 Z" fill="#121212"/><path d="M13.8 16.5 L5 24.9 L5 26.1 L13.8 20.5 Z" fill="#121212"/><path d="M26.2 16.5 L35 24.9 L35 26.1 L26.2 20.5 Z" fill="#121212"/><path d="M14.5 19 L8.5 28.9 L8.5 30.1 L14.5 23 Z" fill="#121212"/><path d="M25.5 19 L31.5 28.9 L31.5 30.1 L25.5 23 Z" fill="#121212"/><path d="M13.5 8 C15 7 25 7 26.5 8 L26 24 L14 24 Z" fill="#121212"/><circle cx="20" cy="6.5" r="3" fill="#121212"/><path d="M17.8 2.5 L18.6 1 L20 2.3 L21.4 1 L22.2 2.5 L22.2 4.5 L17.8 4.5 Z" fill="#b9b84a"/><path d="M15.7 14.4 L24.7 14.4 L24.7 21.5 C24.7 23.5 22 24.5 20.2 25 C18.4 24.5 15.7 23.5 15.7 21.5 Z" fill="#b93a3d"/><rect x="15.7" y="17.8" width="9" height="3.2" fill="#efe8e6"/><path d="M16 23 L24 23 L23 33 L17 33 Z" fill="#121212"/><path d="M12 33 C15 38 18 39 20 40 C22 39 25 38 28 33 C24 35 16 35 12 33 Z" fill="#2b2838"/><path d="M4.5 24.5 C6 28 8 31 10.5 33" stroke="#bdbb4c" stroke-width="2.4" fill="none"/><path d="M34.5 22.5 C34 26 32.5 29 30 31.5" stroke="#bdbb4c" stroke-width="2.4" fill="none"/></svg>
<div class="t" style="left:473px;top:290.88px;font-size:13.6px;font-family:'Liberation Mono',monospace;font-weight:bold;color:#3b5256;transform:scaleX(0.824);transform-origin:0 0;"><span style="font-size:13.6px">CERTIFICATE OF DEATH</span></div>
<div class="t" style="left:407.8px;top:305.76px;font-size:8.2px;font-family:'Liberation Serif',serif;color:#221c15;transform:scaleX(1.011);transform-origin:0 0;-webkit-text-stroke:0.35px #2a231b;"><span style="font-size:8.2px">1. Death Entry Number</span></div>
<div class="t" style="left:554.5px;top:305.18px;font-size:10.6px;font-family:'Liberation Mono',monospace;font-weight:bold;color:#161616;transform:scaleX(0.811);transform-origin:0 0;"><span style="font-size:7.6px">C</span><span style="font-size:7.6px">K</span><span style="font-size:10.6px">/0000021/2019</span></div>
<div class="t" style="left:407.8px;top:320.23px;font-size:8.2px;font-family:'Liberation Serif',serif;color:#221c15;transform:scaleX(1.013);transform-origin:0 0;-webkit-text-stroke:0.35px #2a231b;"><span style="font-size:8.2px">2. Registration Number</span></div>
<div class="t" style="left:554.5px;top:319.65px;font-size:10.6px;font-family:'Liberation Mono',monospace;font-weight:bold;color:#161616;transform:scaleX(0.821);transform-origin:0 0;"><span style="font-size:10.6px">0000021109</span></div>
<div class="t" style="left:407.8px;top:334.70px;font-size:8.2px;font-family:'Liberation Serif',serif;color:#221c15;transform:scaleX(0.976);transform-origin:0 0;-webkit-text-stroke:0.35px #2a231b;"><span style="font-size:8.2px">3. Name</span></div>
<div class="t" style="left:554.5px;top:336.41px;font-size:7.6px;font-family:'Liberation Mono',monospace;font-weight:bold;color:#161616;transform:scaleX(0.968);transform-origin:0 0;"><span style="font-size:7.6px">XXXXXX</span></div>
<div class="t" style="left:407.8px;top:349.17px;font-size:8.2px;font-family:'Liberation Serif',serif;color:#221c15;transform:scaleX(1.014);transform-origin:0 0;-webkit-text-stroke:0.35px #2a231b;"><span style="font-size:8.2px">4. Date of Birth</span></div>
<div class="t" style="left:554.5px;top:348.59px;font-size:10.6px;font-family:'Liberation Mono',monospace;font-weight:bold;color:#161616;transform:scaleX(0.900);transform-origin:0 0;"><span style="font-size:10.6px">5</span><span style="font-size:7.6px">TH DECEMBER</span><span style="font-size:10.6px">,1940</span></div>
<div class="t" style="left:407.8px;top:363.64px;font-size:8.2px;font-family:'Liberation Serif',serif;color:#221c15;transform:scaleX(0.937);transform-origin:0 0;-webkit-text-stroke:0.35px #2a231b;"><span style="font-size:8.2px">5. Sex</span></div>
<div class="t" style="left:554.5px;top:365.35px;font-size:7.6px;font-family:'Liberation Mono',monospace;font-weight:bold;color:#161616;transform:scaleX(0.959);transform-origin:0 0;"><span style="font-size:7.6px">MALE</span></div>
<div class="t" style="left:407.8px;top:378.11px;font-size:8.2px;font-family:'Liberation Serif',serif;color:#221c15;transform:scaleX(1.015);transform-origin:0 0;-webkit-text-stroke:0.35px #2a231b;"><span style="font-size:8.2px">6. Date of Death</span></div>
<div class="t" style="left:554.5px;top:377.53px;font-size:10.6px;font-family:'Liberation Mono',monospace;font-weight:bold;color:#161616;transform:scaleX(0.900);transform-origin:0 0;"><span style="font-size:10.6px">8</span><span style="font-size:7.6px">TH FEBRUARY</span><span style="font-size:10.6px">,2019</span></div>
<div class="t" style="left:407.8px;top:392.58px;font-size:8.2px;font-family:'Liberation Serif',serif;color:#221c15;transform:scaleX(1.006);transform-origin:0 0;-webkit-text-stroke:0.35px #2a231b;"><span style="font-size:8.2px">7. Place of Death</span></div>
<div class="t" style="left:554.5px;top:394.29px;font-size:7.6px;font-family:'Liberation Mono',monospace;font-weight:bold;color:#161616;transform:scaleX(0.978);transform-origin:0 0;"><span style="font-size:7.6px">AUSTRIA, VIENNA, INNERE STADT</span></div>
<div class="t" style="left:407.8px;top:407.05px;font-size:8.2px;font-family:'Liberation Serif',serif;color:#221c15;transform:scaleX(0.998);transform-origin:0 0;-webkit-text-stroke:0.35px #2a231b;"><span style="font-size:8.2px">8. Name of Mother</span></div>
<div class="t" style="left:554.5px;top:408.76px;font-size:7.6px;font-family:'Liberation Mono',monospace;font-weight:bold;color:#161616;transform:scaleX(0.957);transform-origin:0 0;"><span style="font-size:7.6px">XXXXXX</span></div>
<div class="t" style="left:407.8px;top:421.52px;font-size:8.2px;font-family:'Liberation Serif',serif;color:#221c15;transform:scaleX(0.997);transform-origin:0 0;-webkit-text-stroke:0.35px #2a231b;"><span style="font-size:8.2px">9. Name of Father</span></div>
<div class="t" style="left:554.5px;top:423.23px;font-size:7.6px;font-family:'Liberation Mono',monospace;font-weight:bold;color:#161616;transform:scaleX(0.957);transform-origin:0 0;"><span style="font-size:7.6px">XXXXXX</span></div>
<div class="t" style="left:407.8px;top:435.99px;font-size:8.2px;font-family:'Liberation Serif',serif;color:#221c15;transform:scaleX(1.010);transform-origin:0 0;-webkit-text-stroke:0.35px #2a231b;"><span style="font-size:8.2px">10. Date of Registration</span></div>
<div class="t" style="left:554.5px;top:435.41px;font-size:10.6px;font-family:'Liberation Mono',monospace;font-weight:bold;color:#161616;transform:scaleX(0.869);transform-origin:0 0;"><span style="font-size:10.6px">10</span><span style="font-size:7.6px">TH MAY</span><span style="font-size:10.6px">,2019</span></div>
<div class="t" style="left:471px;top:458.61px;font-size:4.6px;font-family:'Liberation Serif',serif;font-weight:bold;color:#2a2620;transform:scaleX(1.043);transform-origin:0 0;"><span style="font-size:4.6px">I hereby certify the above to be a true and correct extract from the</span></div>
<div class="t" style="left:511.7px;top:464.61px;font-size:4.6px;font-family:'Liberation Serif',serif;font-weight:bold;color:#2a2620;transform:scaleX(1.091);transform-origin:0 0;"><span style="font-size:4.6px">Death Register kept at NSB</span></div>
<svg style="left:408px;top:446px;" width="56" height="22" viewBox="0 0 56 22"><path d="M12 3 C13 8 11 14 6 15 C3 15 2 13 4 11" stroke="#8d7fc0" stroke-width="1.6" fill="none" opacity="0.8"/><circle cx="16" cy="14" r="0.9" fill="#8d7fc0"/><path d="M30 4 C24 3 20 10 23 14 C26 16 30 13 31 11 M33 8 L33 14 M36 5 L35 14 C38 12 40 8 39 6 M39 10 C41 9 44 8 46 10 C44 12 42 14 45 14 C48 13 50 10 52 9" stroke="#8d7fc0" stroke-width="1.3" fill="none" opacity="0.8"/></svg>
<div class="t" style="left:409px;top:464.44px;font-size:4.8px;font-family:'Liberation Serif',serif;color:#2a2a33;transform:scaleX(0.998);transform-origin:0 0;font-style:italic;"><span style="font-size:4.8px">District/Assistant Registrar</span></div>
<svg style="left:624px;top:403px;" width="64" height="64" viewBox="0 0 64 64"><circle cx="32" cy="32" r="30" fill="rgba(185,170,210,0.3)" stroke="#9685bd" stroke-width="1.6"/><circle cx="32" cy="32" r="26.5" fill="none" stroke="#a394c4" stroke-width="0.7"/><circle cx="32" cy="32" r="17" fill="rgba(160,140,200,0.28)" stroke="#9484bb" stroke-width="0.8"/><text x="11.29" y="41.54" font-family="Liberation Sans" font-size="4.1" font-weight="bold" fill="#7d6aae" text-anchor="middle" dominant-baseline="central" transform="rotate(-114.7 11.29 41.54)">A</text><text x="10.34" y="39.11" font-family="Liberation Sans" font-size="4.1" font-weight="bold" fill="#7d6aae" text-anchor="middle" dominant-baseline="central" transform="rotate(-108.2 10.34 39.11)">U</text><text x="9.67" y="36.59" font-family="Liberation Sans" font-size="4.1" font-weight="bold" fill="#7d6aae" text-anchor="middle" dominant-baseline="central" transform="rotate(-101.6 9.67 36.59)">S</text><text x="9.29" y="34.01" font-family="Liberation Sans" font-size="4.1" font-weight="bold" fill="#7d6aae" text-anchor="middle" dominant-baseline="central" transform="rotate(-95.1 9.29 34.01)">T</text><text x="9.21" y="31.40" font-family="Liberation Sans" font-size="4.1" font-weight="bold" fill="#7d6aae" text-anchor="middle" dominant-baseline="central" transform="rotate(-88.5 9.21 31.40)">R</text><text x="9.42" y="28.80" font-family="Liberation Sans" font-size="4.1" font-weight="bold" fill="#7d6aae" text-anchor="middle" dominant-baseline="central" transform="rotate(-81.9 9.42 28.80)">I</text><text x="9.94" y="26.25" font-family="Liberation Sans" font-size="4.1" font-weight="bold" fill="#7d6aae" text-anchor="middle" dominant-baseline="central" transform="rotate(-75.4 9.94 26.25)">A</text><text x="11.82" y="21.39" font-family="Liberation Sans" font-size="4.1" font-weight="bold" fill="#7d6aae" text-anchor="middle" dominant-baseline="central" transform="rotate(-62.3 11.82 21.39)">C</text><text x="13.16" y="19.16" font-family="Liberation Sans" font-size="4.1" font-weight="bold" fill="#7d6aae" text-anchor="middle" dominant-baseline="central" transform="rotate(-55.7 13.16 19.16)">O</text><text x="14.75" y="17.09" font-family="Liberation Sans" font-size="4.1" font-weight="bold" fill="#7d6aae" text-anchor="middle" dominant-baseline="central" transform="rotate(-49.2 14.75 17.09)">U</text><text x="16.56" y="15.22" font-family="Liberation Sans" font-size="4.1" font-weight="bold" fill="#7d6aae" text-anchor="middle" dominant-baseline="central" transform="rotate(-42.6 16.56 15.22)">N</text><text x="18.58" y="13.57" font-family="Liberation Sans" font-size="4.1" font-weight="bold" fill="#7d6aae" text-anchor="middle" dominant-baseline="central" transform="rotate(-36.1 18.58 13.57)">C</text><text x="20.77" y="12.16" font-family="Liberation Sans" font-size="4.1" font-weight="bold" fill="#7d6aae" text-anchor="middle" dominant-baseline="central" transform="rotate(-29.5 20.77 12.16)">I</text><text x="23.11" y="11.00" font-family="Liberation Sans" font-size="4.1" font-weight="bold" fill="#7d6aae" text-anchor="middle" dominant-baseline="central" transform="rotate(-22.9 23.11 11.00)">L</text><text x="28.11" y="9.53" font-family="Liberation Sans" font-size="4.1" font-weight="bold" fill="#7d6aae" text-anchor="middle" dominant-baseline="central" transform="rotate(-9.8 28.11 9.53)">D</text><text x="30.70" y="9.24" font-family="Liberation Sans" font-size="4.1" font-weight="bold" fill="#7d6aae" text-anchor="middle" dominant-baseline="central" transform="rotate(-3.3 30.70 9.24)">E</text><text x="33.30" y="9.24" font-family="Liberation Sans" font-size="4.1" font-weight="bold" fill="#7d6aae" text-anchor="middle" dominant-baseline="central" transform="rotate(3.3 33.30 9.24)">P</text><text x="35.89" y="9.53" font-family="Liberation Sans" font-size="4.1" font-weight="bold" fill="#7d6aae" text-anchor="middle" dominant-baseline="central" transform="rotate(9.8 35.89 9.53)">A</text><text x="38.43" y="10.13" font-family="Liberation Sans" font-size="4.1" font-weight="bold" fill="#7d6aae" text-anchor="middle" dominant-baseline="central" transform="rotate(16.4 38.43 10.13)">R</text><text x="40.89" y="11.00" font-family="Liberation Sans" font-size="4.1" font-weight="bold" fill="#7d6aae" text-anchor="middle" dominant-baseline="central" transform="rotate(22.9 40.89 11.00)">T</text><text x="43.23" y="12.16" font-family="Liberation Sans" font-size="4.1" font-weight="bold" fill="#7d6aae" text-anchor="middle" dominant-baseline="central" transform="rotate(29.5 43.23 12.16)">M</text><text x="45.42" y="13.57" font-family="Liberation Sans" font-size="4.1" font-weight="bold" fill="#7d6aae" text-anchor="middle" dominant-baseline="central" transform="rotate(36.1 45.42 13.57)">E</text><text x="47.44" y="15.22" font-family="Liberation Sans" font-size="4.1" font-weight="bold" fill="#7d6aae" text-anchor="middle" dominant-baseline="central" transform="rotate(42.6 47.44 15.22)">N</text><text x="49.25" y="17.09" font-family="Liberation Sans" font-size="4.1" font-weight="bold" fill="#7d6aae" text-anchor="middle" dominant-baseline="central" transform="rotate(49.2 49.25 17.09)">T</text><text x="52.18" y="21.39" font-family="Liberation Sans" font-size="4.1" font-weight="bold" fill="#7d6aae" text-anchor="middle" dominant-baseline="central" transform="rotate(62.3 52.18 21.39)">O</text><text x="53.26" y="23.77" font-family="Liberation Sans" font-size="4.1" font-weight="bold" fill="#7d6aae" text-anchor="middle" dominant-baseline="central" transform="rotate(68.8 53.26 23.77)">F</text><text x="54.58" y="28.80" font-family="Liberation Sans" font-size="4.1" font-weight="bold" fill="#7d6aae" text-anchor="middle" dominant-baseline="central" transform="rotate(81.9 54.58 28.80)">V</text><text x="54.79" y="31.40" font-family="Liberation Sans" font-size="4.1" font-weight="bold" fill="#7d6aae" text-anchor="middle" dominant-baseline="central" transform="rotate(88.5 54.79 31.40)">I</text><text x="54.71" y="34.01" font-family="Liberation Sans" font-size="4.1" font-weight="bold" fill="#7d6aae" text-anchor="middle" dominant-baseline="central" transform="rotate(95.1 54.71 34.01)">E</text><text x="54.33" y="36.59" font-family="Liberation Sans" font-size="4.1" font-weight="bold" fill="#7d6aae" text-anchor="middle" dominant-baseline="central" transform="rotate(101.6 54.33 36.59)">N</text><text x="53.66" y="39.11" font-family="Liberation Sans" font-size="4.1" font-weight="bold" fill="#7d6aae" text-anchor="middle" dominant-baseline="central" transform="rotate(108.2 53.66 39.11)">N</text><text x="52.71" y="41.54" font-family="Liberation Sans" font-size="4.1" font-weight="bold" fill="#7d6aae" text-anchor="middle" dominant-baseline="central" transform="rotate(114.7 52.71 41.54)">A</text><text x="44.98" y="49.14" font-family="Liberation Sans" font-size="3.8" font-weight="bold" fill="#7d6aae" text-anchor="middle" dominant-baseline="central" transform="rotate(-37.1 44.98 49.14)">A</text><text x="43.21" y="50.35" font-family="Liberation Sans" font-size="3.8" font-weight="bold" fill="#7d6aae" text-anchor="middle" dominant-baseline="central" transform="rotate(-31.4 43.21 50.35)">N</text><text x="41.33" y="51.37" font-family="Liberation Sans" font-size="3.8" font-weight="bold" fill="#7d6aae" text-anchor="middle" dominant-baseline="central" transform="rotate(-25.7 41.33 51.37)">N</text><text x="39.35" y="52.20" font-family="Liberation Sans" font-size="3.8" font-weight="bold" fill="#7d6aae" text-anchor="middle" dominant-baseline="central" transform="rotate(-20.0 39.35 52.20)">E</text><text x="37.31" y="52.84" font-family="Liberation Sans" font-size="3.8" font-weight="bold" fill="#7d6aae" text-anchor="middle" dominant-baseline="central" transform="rotate(-14.3 37.31 52.84)">I</text><text x="35.20" y="53.26" font-family="Liberation Sans" font-size="3.8" font-weight="bold" fill="#7d6aae" text-anchor="middle" dominant-baseline="central" transform="rotate(-8.6 35.20 53.26)">V</text><text x="30.93" y="53.47" font-family="Liberation Sans" font-size="3.8" font-weight="bold" fill="#7d6aae" text-anchor="middle" dominant-baseline="central" transform="rotate(2.9 30.93 53.47)">A</text><text x="28.80" y="53.26" font-family="Liberation Sans" font-size="3.8" font-weight="bold" fill="#7d6aae" text-anchor="middle" dominant-baseline="central" transform="rotate(8.6 28.80 53.26)">I</text><text x="26.69" y="52.84" font-family="Liberation Sans" font-size="3.8" font-weight="bold" fill="#7d6aae" text-anchor="middle" dominant-baseline="central" transform="rotate(14.3 26.69 52.84)">R</text><text x="24.65" y="52.20" font-family="Liberation Sans" font-size="3.8" font-weight="bold" fill="#7d6aae" text-anchor="middle" dominant-baseline="central" transform="rotate(20.0 24.65 52.20)">T</text><text x="22.67" y="51.37" font-family="Liberation Sans" font-size="3.8" font-weight="bold" fill="#7d6aae" text-anchor="middle" dominant-baseline="central" transform="rotate(25.7 22.67 51.37)">S</text><text x="20.79" y="50.35" font-family="Liberation Sans" font-size="3.8" font-weight="bold" fill="#7d6aae" text-anchor="middle" dominant-baseline="central" transform="rotate(31.4 20.79 50.35)">U</text><text x="19.02" y="49.14" font-family="Liberation Sans" font-size="3.8" font-weight="bold" fill="#7d6aae" text-anchor="middle" dominant-baseline="central" transform="rotate(37.1 19.02 49.14)">A</text><path d="M29 23.7 L19 22 L29 26.3 Z" fill="#8f7cc0"/><path d="M35 23.7 L45 22 L35 26.3 Z" fill="#8f7cc0"/><path d="M29 26.2 L18.5 27 L29 28.8 Z" fill="#8f7cc0"/><path d="M35 26.2 L45.5 27 L35 28.8 Z" fill="#8f7cc0"/><path d="M29 28.7 L19.5 32 L29 31.3 Z" fill="#8f7cc0"/><path d="M35 28.7 L44.5 32 L35 31.3 Z" fill="#8f7cc0"/><path d="M29.5 31.2 L22 36.5 L29.5 33.8 Z" fill="#8f7cc0"/><path d="M34.5 31.2 L42 36.5 L34.5 33.8 Z" fill="#8f7cc0"/><path d="M30 33.7 L25 40 L30 36.3 Z" fill="#8f7cc0"/><path d="M34 33.7 L39 40 L34 36.3 Z" fill="#8f7cc0"/><path d="M28.5 24 C29 21 35 21 35.5 24 L35 38 L33 42 L31 42 L29 38 Z" fill="#8f7cc0"/><circle cx="32" cy="21.5" r="2.2" fill="#8f7cc0"/><path d="M27 41 C30 44 34 44 37 41 L32 45 Z" fill="#8f7cc0"/><text x="9" y="40" font-size="4" fill="#8270b0">*</text><text x="52" y="40" font-size="4" fill="#8270b0">*</text></svg>
<svg style="left:0;top:0" width="1080" height="720" viewBox="0 0 1080 720"><path d="M870.8 666.3 H858.9 V696.6 H871.6 M858.9 681.2 H869.8" stroke="#1a1a1a" stroke-width="2.4" fill="none"/><path d="M877.5 665.8 V697.1 M893 665.8 L878.2 682.5 L894 697.1" stroke="#1a1a1a" stroke-width="2.4" fill="none"/><ellipse cx="907.6" cy="681.45" rx="10.6" ry="14.9" stroke="#1a1a1a" stroke-width="2.4" fill="none"/><path d="M944 670.5 C941 667.5 937.5 666.2 934.5 666.2 C927 666.2 923.6 673.5 923.6 681.45 C923.6 689.5 927.5 696.5 934.5 696.5 C938.5 696.5 942 695.5 944.2 693.5 V682.3 H936.5" stroke="#1a1a1a" stroke-width="2.4" fill="none"/><path d="M961.5 666.3 H950.3 V696.6 H962 M950.3 681.2 H960.5" stroke="#1a1a1a" stroke-width="2.4" fill="none"/><path d="M966.8 697.1 L976 665.8 L986.2 697.1 M969.8 686.8 H982.8" stroke="#1a1a1a" stroke-width="2.4" fill="none"/><rect x="991.2" y="693" width="3.4" height="3.6" fill="#1a1a1a"/><ellipse cx="1009.5" cy="681.45" rx="10.3" ry="14.9" stroke="#80a624" stroke-width="2.7" fill="none"/><path d="M1027.2 697.1 V666.3 H1034.5 C1040 666.3 1042.5 669.5 1042.5 674.8 C1042.5 680 1039.5 683.3 1034.5 683.3 H1027.2 M1035.5 683.3 L1044.6 697.1" stroke="#80a624" stroke-width="2.7" fill="none"/><path d="M1068 670.5 C1065.5 667.5 1062 666.2 1058.7 666.2 C1051 666.2 1047.6 673.5 1047.6 681.45 C1047.6 689.5 1051.5 696.5 1058.7 696.5 C1062.7 696.5 1066 695.5 1068.3 693.5 V682.3 H1058.5" stroke="#80a624" stroke-width="2.7" fill="none"/></svg>
</body></html>
